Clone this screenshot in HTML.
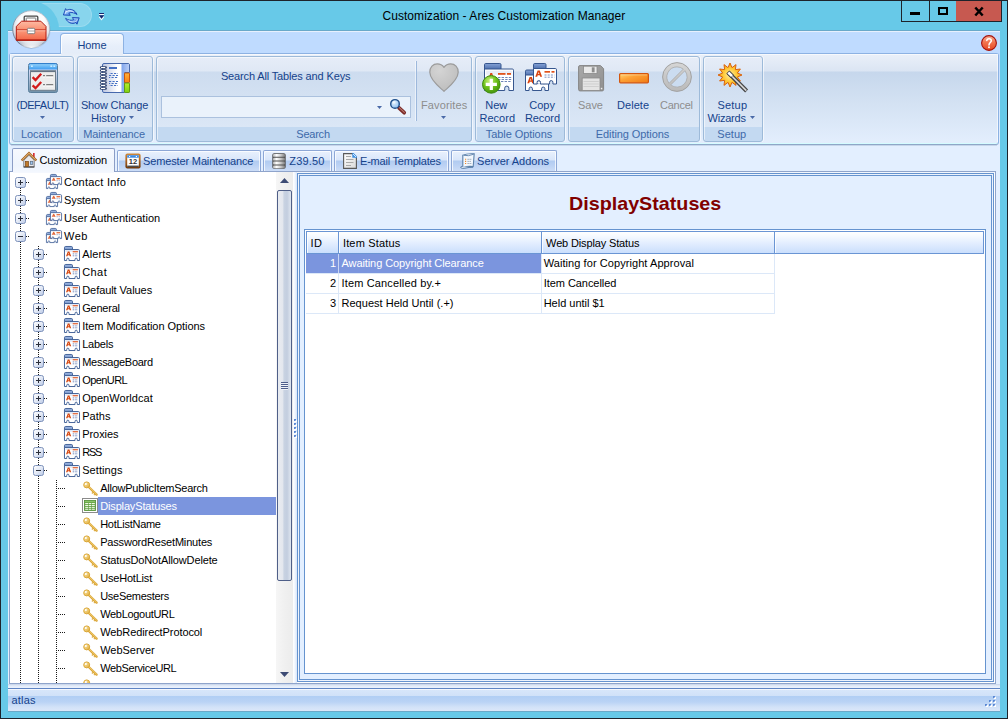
<!DOCTYPE html>
<html lang="en"><head><meta charset="utf-8"><title>Customization - Ares Customization Manager</title>
<style>
html,body{margin:0;padding:0;}
body{width:1008px;height:719px;overflow:hidden;background:#67c9e8;font-family:"Liberation Sans",sans-serif;font-size:11px;color:#000;}
#win{position:absolute;left:0;top:0;width:1008px;height:719px;overflow:hidden;background:#67c9e8;}
#win div,#win span,#win svg{position:absolute;box-sizing:border-box;}
#win svg{overflow:visible;}
.t{white-space:nowrap;line-height:13px;font-size:11px;color:#000;}
.tb{white-space:nowrap;line-height:13px;font-size:11px;color:#15428b;}
.tg{white-space:nowrap;line-height:13px;font-size:11px;color:#8d8d8d;}
.tc{white-space:nowrap;line-height:13px;font-size:11px;color:#3e6aaa;}
.tw{white-space:nowrap;line-height:13px;font-size:11px;color:#fff;}
.grp{border:1px solid #9dbad9;border-radius:3px;background:linear-gradient(#e6edf8 0px,#dfe8f5 14px,#cddcef 15px,#dbe7f6 70px,#c3d9f1 70px,#c3d9f1 100%);box-shadow:inset 1px 1px 0 rgba(255,255,255,.55),1px 0 0 rgba(255,255,255,.6);}

</style></head>
<body>
<div id="win">
<!-- window frame -->
<div style="left:0px;top:0px;width:1008px;height:1px;background:#1d232b"></div><div style="left:0px;top:0px;width:1px;height:719px;background:#1d232b"></div><div style="left:1007px;top:0px;width:1px;height:719px;background:#1d232b"></div><div style="left:0px;top:718px;width:1008px;height:1px;background:#1d232b"></div><div style="left:8px;top:30px;width:992px;height:1px;background:#69a9c9"></div><div style="left:8px;top:31px;width:992px;height:680px;background:#e3efff"></div><div style="left:8px;top:31px;width:992px;height:23px;background:linear-gradient(#e7f0fd 0px,#e7f0fd 1px,#c3ddff 1px,#bfdbff 2px,#bfdbff 100%)"></div><div style="left:36px;top:3px;width:56px;height:24px;border-radius:3px 12px 12px 3px/3px 12px 12px 3px;background:rgba(255,255,255,.22);border:1px solid rgba(255,255,255,.16)"></div><div style="left:3.3px;top:1px;width:56px;height:56px;border-radius:50%;background:#67c9e8"></div><div style="left:8px;top:30px;width:60px;height:1px;background:#69a9c9"></div><div style="left:8px;top:31px;width:60px;height:23px;background:linear-gradient(#e7f0fd 0px,#e7f0fd 1px,#c3ddff 1px,#bfdbff 2px,#bfdbff 100%)"></div><div style="left:1px;top:1px;width:60px;height:2px;background:#67c9e8"></div><svg style="left:62.5px;top:7.7px" width="17" height="18" viewBox="0 0 17 18"><defs><linearGradient id="g1" x1="0" y1="0" x2="1" y2="1"><stop offset="0" stop-color="#eaf4ff"/><stop offset=".45" stop-color="#86b8f5"/><stop offset="1" stop-color="#2a62cf"/></linearGradient></defs>
<path d="M14 6.500C12.300 2.300 7.600 0 3.700 2.300L2.600.6.400 7 7.300 7.300 5.800 5.100C8.500 3.900 11.600 4.700 14 6.500Z" fill="url(#g1)" stroke="#1644b4" stroke-width=".9" stroke-linejoin="round"/>
<path d="M2.600 10.300C4.300 14.500 9 16.800 12.900 14.500l1.100 1.700 2.200-6.400-6.900-.3 1.500 2.200C8.100 12.900 5 12.100 2.600 10.300Z" fill="url(#g1)" stroke="#1644b4" stroke-width=".9" stroke-linejoin="round"/>
<path d="M2.300 5.700 3 3.600C6 2.300 9 2.800 11 4.300" stroke="#ffffff" stroke-width=".9" fill="none" opacity=".75"/>
<path d="M14.300 11.200 13.600 13.200C10.600 14.500 7.600 14 5.600 12.500" stroke="#ffffff" stroke-width=".9" fill="none" opacity=".6"/></svg><svg style="left:98px;top:12px" width="8" height="9" viewBox="0 0 8 9"><path d="M1.200 4.600 3.500 7.700 5.800 4.600" stroke="#f2fbfe" stroke-width="1.100" fill="none"/><rect x="1" y="1" width="5" height="1" fill="#17276f"/><rect x="1" y="2" width="5" height="1" fill="#f2fbfe"/><path d="M.8 3.300H6.200L3.500 6.700Z" fill="#17276f"/></svg><span class="t" style="left:382.5px;top:9px;letter-spacing:0.05px;font-size:12px;line-height:15px;color:#000">Customization - Ares Customization Manager</span><div style="left:901px;top:0px;width:101px;height:22px;background:#1d232b"></div><div style="left:902px;top:1px;width:27px;height:20px;background:#67c9e8"></div><div style="left:930px;top:1px;width:26px;height:20px;background:#67c9e8"></div><div style="left:956px;top:1px;width:45px;height:20px;background:#c75950"></div><div style="left:910px;top:12px;width:10px;height:3px;background:#000"></div><div style="left:938px;top:7px;width:10px;height:8px;border:2px solid #000"></div><svg style="left:974px;top:7px" width="10" height="9" viewBox="0 0 10 9"><path d="M1.300 .5 8.700 8.500M8.700 .5 1.300 8.500" stroke="#000" stroke-width="2.500" stroke-linecap="butt"/></svg><svg style="left:11px;top:9px" width="40" height="42" viewBox="0 0 40 42"><defs>
<radialGradient id="g2" cx="52%" cy="40%" r="60%"><stop offset="0" stop-color="#ffffff"/><stop offset=".62" stop-color="#fbfcfd"/><stop offset=".82" stop-color="#dde1e8"/><stop offset="1" stop-color="#aeb6c4"/></radialGradient>
<linearGradient id="g3" x1="0" y1="0" x2="0" y2="1"><stop offset="0" stop-color="#fdbba4"/><stop offset=".42" stop-color="#fa9274"/><stop offset=".47" stop-color="#fb9a7c"/><stop offset="1" stop-color="#f26647"/></linearGradient>
<radialGradient id="g4" cx="50%" cy="100%" r="65%"><stop offset="0" stop-color="#ffffff" stop-opacity="1"/><stop offset="1" stop-color="#ffffff" stop-opacity="0"/></radialGradient>
<linearGradient id="g5" x1="1" y1="0" x2="0" y2="1"><stop offset="0" stop-color="#c9d0db"/><stop offset="1" stop-color="#5f6f88"/></linearGradient>
</defs>
<circle cx="20.600" cy="20.900" r="18.900" fill="#3f5f80" opacity=".22"/>
<circle cx="20.200" cy="20.200" r="18.500" fill="url(#g2)" stroke="url(#g5)" stroke-width=".9"/>
<ellipse cx="20.300" cy="34" rx="12.500" ry="5" fill="url(#g4)"/>
<path d="M13.200 12.300V8.200q0-1 1-1h11.600q1 0 1 1v4.100" fill="none" stroke="#474747" stroke-width="1.300"/>
<path d="M15.200 12.300V9.600q0-.6.6-.6h8.400q.6 0 .6.600v2.700" fill="#fff" stroke="#6d6d6d" stroke-width=".9"/>
<path d="M5.300 17.400 10.600 12.200H29.800L35 17.400V31.300H5.300Z" fill="url(#g3)" stroke="#b3170d" stroke-width="1"/>
<path d="M5.600 20.800H34.800" stroke="#c22a1a" stroke-width=".9"/>
<path d="M6 21.800H34.500" stroke="#ffc9b6" stroke-width=".8" opacity=".9"/>
<path d="M5.600 31H34.800" stroke="#a51208" stroke-width="1"/>
<rect x="16.400" y="19.300" width="7.400" height="5.400" rx="1" fill="#fff" stroke="#777" stroke-width=".9"/>
<path d="M17 22H23.200" stroke="#8d8d8d" stroke-width=".8"/></svg><svg style="left:981px;top:35px" width="16" height="16" viewBox="0 0 16 16"><defs><linearGradient id="g6" x1="0" y1="0" x2="0" y2="1"><stop offset="0" stop-color="#fbb49a"/><stop offset=".45" stop-color="#f2744f"/><stop offset="1" stop-color="#e6451f"/></linearGradient></defs>
<circle cx="8" cy="8" r="7.400" fill="url(#g6)" stroke="#a3100c" stroke-width="1.100"/>
<path d="M5.800 5.600C5.800 3 10.300 3 10.300 5.700 10.300 7.500 8 7.700 8 10" fill="none" stroke="#fff" stroke-width="1.500" stroke-linecap="round"/>
<circle cx="8" cy="12.200" r=".95" fill="#fff"/></svg><div style="left:60px;top:33px;width:64px;height:22px;border:1px solid #8db2e3;border-bottom:none;border-radius:4px 4px 0 0;background:linear-gradient(#f4f8fe,#e6eefa 60%,#e4ecf8);box-shadow:inset 1px 1px 0 rgba(255,255,255,.9)"></div><span class="tb" style="left:77.5px;top:39px;letter-spacing:-0.11px;">Home</span><!-- ribbon panel -->
<div style="left:8px;top:54px;width:992px;height:92px;background:linear-gradient(#bfdbff,#cfe3ff 40%,#e3efff)"></div><div style="left:9px;top:53px;width:990px;height:92px;border:1px solid #8db2e3;border-bottom-color:#8ea7c8;border-radius:3px;background:linear-gradient(#eaf0f9 0px,#dbe5f3 17px,#c6d7ec 18px,#d4e2f3 50px,#e3eefd 89px,#d4fcff 89px,#d4fcff 90px)"></div><div style="left:10px;top:54px;width:1px;height:88px;background:rgba(255,255,255,.6)"></div><div style="left:997px;top:54px;width:1px;height:88px;background:rgba(255,255,255,.6)"></div><div style="left:10px;top:54px;width:988px;height:1px;background:rgba(255,255,255,.6)"></div><div style="left:11px;top:145px;width:986px;height:1px;background:#c6d6eb"></div><div style="left:61px;top:53px;width:62px;height:3px;background:linear-gradient(#e5edf8,#e9eff9)"></div><div style="left:59px;top:51px;width:2px;height:3px;background:linear-gradient(135deg,rgba(141,178,227,0) 40%,#8db2e3 60%,#8db2e3 100%)"></div><div style="left:123px;top:51px;width:2px;height:3px;background:linear-gradient(225deg,rgba(141,178,227,0) 40%,#8db2e3 60%,#8db2e3 100%)"></div><div class="grp" style="left:12px;top:56px;width:62px;height:86px;"></div><span class="tc" style="left:20.9px;top:128px;letter-spacing:-0.06px;">Location</span><div class="grp" style="left:77px;top:56px;width:76px;height:86px;"></div><span class="tc" style="left:83.2px;top:128px;letter-spacing:-0.11px;">Maintenance</span><div class="grp" style="left:156px;top:56px;width:316px;height:86px;"></div><span class="tc" style="left:296.3px;top:128px;letter-spacing:-0.23px;">Search</span><div class="grp" style="left:475px;top:56px;width:90px;height:86px;"></div><span class="tc" style="left:485.7px;top:128px;letter-spacing:-0.06px;">Table Options</span><div class="grp" style="left:568px;top:56px;width:132px;height:86px;"></div><span class="tc" style="left:595.8px;top:128px;letter-spacing:-0.08px;">Editing Options</span><div class="grp" style="left:703px;top:56px;width:60px;height:86px;"></div><span class="tc" style="left:717.3px;top:128px;letter-spacing:0.04px;">Setup</span><svg style="left:28px;top:63px" width="30" height="30" viewBox="0 0 30 30"><defs>
<linearGradient id="g7" x1="0" y1="0" x2="0" y2="1"><stop offset="0" stop-color="#dde0ff"/><stop offset=".35" stop-color="#c9d2ee"/><stop offset="1" stop-color="#6f8fa6"/></linearGradient>
<linearGradient id="g8" x1="0" y1="0" x2="0" y2="1"><stop offset="0" stop-color="#8fd0fb"/><stop offset="1" stop-color="#3f9df0"/></linearGradient></defs>
<rect x=".5" y=".5" width="29" height="29" rx="2" fill="url(#g7)" stroke="#5b7f9c" stroke-width="1"/>
<path d="M1 6.4V2.5q0-1.5 1.5-1.5h25q1.5 0 1.5 1.5v3.9Z" fill="url(#g8)"/>
<path d="M1 1.6q0-1 1.5-1h25q1.5 0 1.5 1" fill="none" stroke="#2f7fd0" stroke-width="1"/>
<rect x="3" y="2.4" width="1.8" height="1.6" fill="#c9ebff"/><rect x="22.4" y="2.4" width="1.8" height="1.6" fill="#c9ebff"/><rect x="25.4" y="2.4" width="1.8" height="1.6" fill="#c9ebff"/>
<rect x="2.5" y="7.7" width="25" height="19.6" fill="#ededed" stroke="#6d7e8b" stroke-width="1"/>
<path d="M3 8.6H27" stroke="#59687a" stroke-width="1"/>
<path d="M4.6 14.2 7.5 17 13.2 10.8" fill="none" stroke="#d31a1a" stroke-width="2.3"/>
<path d="M4.6 22.4 7.5 25.2 13.2 19" fill="none" stroke="#d31a1a" stroke-width="2.3"/>
<rect x="15" y="12" width="2" height="1.5" fill="#7d7d7d"/><rect x="18.2" y="12" width="7" height="1.5" fill="#7d7d7d"/>
<rect x="15" y="13.5" width="2" height="1" fill="#fff"/><rect x="18.2" y="13.5" width="7" height="1" fill="#fff"/>
<rect x="15" y="21" width="2" height="1.5" fill="#7d7d7d"/><rect x="18.2" y="21" width="7" height="1.5" fill="#7d7d7d"/>
<rect x="15" y="22.5" width="2" height="1" fill="#fff"/><rect x="18.2" y="22.5" width="7" height="1" fill="#fff"/></svg><span class="tb" style="left:16.5px;top:99px;letter-spacing:-0.44px;">(DEFAULT)</span><svg style="left:40px;top:116px" width="5" height="3" viewBox="0 0 5 3"><path d="M0 0H5L2.500 3Z" fill="#4a6aa8"/></svg><svg style="left:100px;top:63px" width="30" height="30" viewBox="0 0 30 30"><defs>
<linearGradient id="g9" x1="0" y1="0" x2="1" y2="0"><stop offset="0" stop-color="#b9c3df"/><stop offset=".55" stop-color="#ffffff"/><stop offset="1" stop-color="#ffffff"/></linearGradient>
<linearGradient id="g10" x1="0" y1="0" x2="0" y2="1"><stop offset="0" stop-color="#ffb13a"/><stop offset="1" stop-color="#fb7f12"/></linearGradient>
<linearGradient id="g11" x1="0" y1="0" x2="0" y2="1"><stop offset="0" stop-color="#b6ee2c"/><stop offset="1" stop-color="#7fd010"/></linearGradient>
<linearGradient id="g12" x1="0" y1="0" x2="1" y2="0"><stop offset="0" stop-color="#7fa4ec"/><stop offset="1" stop-color="#b9cdf6"/></linearGradient></defs>
<path d="M2.5 2q0-1.5 1.5-1.5h24q1.5 0 1.5 1.5v7.5H24.5V29.5H4q-1.5 0-1.5-1.5Z" fill="url(#g9)" stroke="#4668ac" stroke-width="1"/>
<path d="M21.5 1H28q1 0 1 1v7H24V29H21.500Z" fill="url(#g12)"/>
<rect x="24.5" y="10" width="5" height="9.600" rx=".6" fill="url(#g10)" stroke="#c9570c" stroke-width="1"/>
<rect x="24.5" y="20" width="5" height="9.500" rx=".6" fill="url(#g11)" stroke="#5f9b12" stroke-width="1"/>
<rect x="9" y="4" width="8" height="2" fill="#4470c4"/>
<path d="M9 10.5H18" stroke="#4470c4" stroke-width="1" stroke-dasharray="2.2 1.3" stroke-dashoffset="2"/><path d="M9 12.5H18" stroke="#4470c4" stroke-width="1" stroke-dasharray="2.2 1.3" stroke-dashoffset="0"/><path d="M9 14.5H18" stroke="#4470c4" stroke-width="1" stroke-dasharray="2.2 1.3" stroke-dashoffset="1"/><path d="M9 18.5H18" stroke="#4470c4" stroke-width="1" stroke-dasharray="2.2 1.3" stroke-dashoffset="0"/><path d="M9 20.5H18" stroke="#4470c4" stroke-width="1" stroke-dasharray="2.2 1.3" stroke-dashoffset="1"/><path d="M9 22.5H18" stroke="#4470c4" stroke-width="1" stroke-dasharray="2.2 1.3" stroke-dashoffset="2"/><path d="M1.200 4.5H5.600" stroke="#34466e" stroke-width="2.600" stroke-linecap="round"/><path d="M1.400 4.5H4.800" stroke="#ffffff" stroke-width="1" stroke-linecap="round"/><path d="M1.200 7.5H5.600" stroke="#34466e" stroke-width="2.600" stroke-linecap="round"/><path d="M1.400 7.5H4.800" stroke="#ffffff" stroke-width="1" stroke-linecap="round"/><path d="M1.200 10.5H5.600" stroke="#34466e" stroke-width="2.600" stroke-linecap="round"/><path d="M1.400 10.5H4.800" stroke="#ffffff" stroke-width="1" stroke-linecap="round"/><path d="M1.200 13.5H5.600" stroke="#34466e" stroke-width="2.600" stroke-linecap="round"/><path d="M1.400 13.5H4.800" stroke="#ffffff" stroke-width="1" stroke-linecap="round"/><path d="M1.200 16.5H5.600" stroke="#34466e" stroke-width="2.600" stroke-linecap="round"/><path d="M1.400 16.5H4.800" stroke="#ffffff" stroke-width="1" stroke-linecap="round"/><path d="M1.200 19.5H5.600" stroke="#34466e" stroke-width="2.600" stroke-linecap="round"/><path d="M1.400 19.5H4.800" stroke="#ffffff" stroke-width="1" stroke-linecap="round"/><path d="M1.200 22.5H5.600" stroke="#34466e" stroke-width="2.600" stroke-linecap="round"/><path d="M1.400 22.5H4.800" stroke="#ffffff" stroke-width="1" stroke-linecap="round"/><path d="M1.200 25.5H5.600" stroke="#34466e" stroke-width="2.600" stroke-linecap="round"/><path d="M1.400 25.5H4.800" stroke="#ffffff" stroke-width="1" stroke-linecap="round"/></svg><span class="tb" style="left:80.9px;top:99px;letter-spacing:-0.17px;">Show Change</span><span class="tb" style="left:91.1px;top:112px;letter-spacing:0.04px;">History</span><svg style="left:129px;top:116px" width="5" height="3" viewBox="0 0 5 3"><path d="M0 0H5L2.500 3Z" fill="#4a6aa8"/></svg><span class="tb" style="left:220.9px;top:70px;letter-spacing:-0.14px;">Search All Tables and Keys</span><div style="left:161px;top:96px;width:250px;height:22px;border:1px solid #abc1de;background:#eaf2fb"></div><svg style="left:377px;top:106px" width="5" height="3" viewBox="0 0 5 3"><path d="M0 0H5L2.500 3Z" fill="#4a6aa8"/></svg><svg style="left:390px;top:98px" width="17" height="17" viewBox="0 0 17 17"><defs><radialGradient id="g13" cx="38%" cy="32%" r="75%"><stop offset="0" stop-color="#ffffff"/><stop offset=".35" stop-color="#c4e0fa"/><stop offset="1" stop-color="#8dbdee"/></radialGradient></defs>
<path d="M9 9.800 14.200 14.700" stroke="#7a2824" stroke-width="3.700" stroke-linecap="round"/>
<path d="M9.300 9.700 14.300 14.400" stroke="#b9776f" stroke-width="1.100" stroke-linecap="round"/>
<circle cx="5" cy="5.900" r="4.300" fill="url(#g13)" stroke="#1f4f8c" stroke-width="1.400"/></svg><div style="left:415px;top:61px;width:1px;height:60px;background:rgba(255,255,255,.55)"></div><div style="left:416px;top:61px;width:1px;height:60px;background:#9db8dc"></div><svg style="left:429px;top:63px" width="30" height="29" viewBox="0 0 30 29"><defs><radialGradient id="g14" cx="35%" cy="25%" r="80%"><stop offset="0" stop-color="#d4d4d4"/><stop offset="1" stop-color="#bdbdbd"/></radialGradient></defs>
<path d="M15 28.300C11 24.500 1 17.500.8 9.300.600 4 4.200.800 8.300.800c3 0 5.300 1.500 6.700 3.500C16.400 2.300 18.700.800 21.700.800c4.100 0 7.700 3.200 7.500 8.500C29 17.500 19 24.500 15 28.300Z" fill="url(#g14)" stroke="#9b9b9b" stroke-width="1.200" stroke-linejoin="round"/></svg><span class="tg" style="left:420.9px;top:99px;letter-spacing:0.14px;">Favorites</span><svg style="left:441px;top:116px" width="5" height="3" viewBox="0 0 5 3"><path d="M0 0H5L2.500 3Z" fill="#4a6aa8"/></svg><svg style="left:484px;top:63px" width="31" height="31" viewBox="0 0 31 31"><defs><linearGradient id="g16" x1="0" y1="0" x2="0" y2="1"><stop offset="0" stop-color="#86a3d6"/><stop offset="1" stop-color="#4668a8"/></linearGradient></defs>
<path d="M0.5 7V1.7q0-1.200 1.200-1.200H15.8q1.200 0 1.200 1.200V7Z" fill="url(#g16)" stroke="#36568e" stroke-width="1.0"/>
<path d="M0.5 6H28.3q1.200 0 1.200 1.200V27.5H24.9V25.204q0-2.10-2.10-2.10t-2.10 2.10V27.5H9.3V25.204q0-2.10-2.10-2.10t-2.10 2.10V27.5H0.5Z" fill="#fff" stroke="#36568e" stroke-width="1.0" stroke-linejoin="round"/><rect x="2.200" y="7.700" width="25.600" height="4" fill="#e9edf6"/>
<rect x="14" y="10" width="7.500" height="1.800" fill="#e2531a"/><rect x="23" y="10" width="4" height="1.800" fill="#e2531a"/>
<path d="M14 14.500H27.500M14 16.500H27.500M17 18.500H27.500" stroke="#6f86b8" stroke-width="1" stroke-dasharray="2.400 1.200"/>
<path d="M4.50 16.00L6.37 10.00H8.13L10.00 16.00H8.46L8.07 14.56H6.42L6.04 16.00ZM6.75 13.36H7.74L7.25 11.44Z" fill="#d9440f" fill-rule="evenodd"/><defs><radialGradient id="g15" cx="40%" cy="30%" r="75%"><stop offset="0" stop-color="#c9f27a"/><stop offset=".5" stop-color="#6fc21c"/><stop offset="1" stop-color="#3f8f0a"/></radialGradient></defs>
<circle cx="7.300" cy="21.400" r="8.800" fill="url(#g15)" stroke="#3e8a10" stroke-width="1"/>
<path d="M7.300 15.800V27M1.700 21.400H12.900" stroke="#fff" stroke-width="3.200"/></svg><span class="tb" style="left:485.2px;top:99px;letter-spacing:0.04px;">New</span><span class="tb" style="left:479.5px;top:112px;letter-spacing:0.01px;">Record</span><svg style="left:525px;top:63px" width="33" height="29" viewBox="0 0 33 29"><g transform="translate(0 6.5)"><defs><linearGradient id="g18" x1="0" y1="0" x2="0" y2="1"><stop offset="0" stop-color="#86a3d6"/><stop offset="1" stop-color="#4668a8"/></linearGradient></defs>
<path d="M0.5 6.5V1.7q0-1.200 1.200-1.200H11.8q1.200 0 1.200 1.200V6.5Z" fill="url(#g18)" stroke="#36568e" stroke-width="1.0"/>
<path d="M0.5 5.5H22.3q1.200 0 1.200 1.200V21.0H19.919999999999998V19.237q0-1.68-1.68-1.68t-1.68 1.68V21.0H7.44V19.237q0-1.68-1.68-1.68t-1.68 1.68V21.0H0.5Z" fill="#fff" stroke="#36568e" stroke-width="1.0" stroke-linejoin="round"/><path d="M2.30 13.80L4.61 7.60H6.79L9.10 13.80H7.20L6.72 12.31H4.68L4.20 13.80ZM5.09 11.07H6.31L5.70 9.09Z" fill="#d9440f" fill-rule="evenodd"/>
<rect x="11.500" y="8" width="5.500" height="1.700" fill="#e2531a"/><rect x="18.500" y="8" width="3" height="1.700" fill="#e2531a"/>
<path d="M11.500 12H21.500M11.500 14.200H21.500" stroke="#7d92c0" stroke-width="1" stroke-dasharray="2 1.200"/></g><g transform="translate(8 0)"><defs><linearGradient id="g20" x1="0" y1="0" x2="0" y2="1"><stop offset="0" stop-color="#86a3d6"/><stop offset="1" stop-color="#4668a8"/></linearGradient></defs>
<path d="M0.5 6.5V1.7q0-1.200 1.200-1.200H11.8q1.200 0 1.200 1.200V6.5Z" fill="url(#g20)" stroke="#36568e" stroke-width="1.0"/>
<path d="M0.5 5.5H22.3q1.200 0 1.200 1.200V21.0H19.919999999999998V19.237q0-1.68-1.68-1.68t-1.68 1.68V21.0H7.44V19.237q0-1.68-1.68-1.68t-1.68 1.68V21.0H0.5Z" fill="#fff" stroke="#36568e" stroke-width="1.0" stroke-linejoin="round"/><path d="M2.30 13.80L4.61 7.60H6.79L9.10 13.80H7.20L6.72 12.31H4.68L4.20 13.80ZM5.09 11.07H6.31L5.70 9.09Z" fill="#d9440f" fill-rule="evenodd"/>
<rect x="11.500" y="8" width="5.500" height="1.700" fill="#e2531a"/><rect x="18.500" y="8" width="3" height="1.700" fill="#e2531a"/>
<path d="M11.500 12H21.500M11.500 14.200H21.500" stroke="#7d92c0" stroke-width="1" stroke-dasharray="2 1.200"/></g></svg><span class="tb" style="left:529.3px;top:99px;letter-spacing:0.00px;">Copy</span><span class="tb" style="left:524.9px;top:112px;letter-spacing:-0.07px;">Record</span><svg style="left:578px;top:64.7px" width="27" height="27" viewBox="0 0 27 27"><defs><linearGradient id="g22" x1="0" y1="0" x2="1" y2="1"><stop offset="0" stop-color="#a9a9a9"/><stop offset="1" stop-color="#8f8f8f"/></linearGradient></defs>
<path d="M.6 2q0-1.400 1.400-1.400H22.500L25.600 3.700V24.500q0 1.400-1.400 1.400H2q-1.400 0-1.400-1.400Z" fill="url(#g22)" stroke="#858585" stroke-width="1"/>
<rect x="5.500" y="1.200" width="13.500" height="7.300" fill="#e9e9e9" stroke="#8a8a8a" stroke-width=".8"/>
<rect x="13.800" y="2.300" width="2.800" height="5" fill="#8d8d8d"/>
<rect x="4.200" y="13" width="17.800" height="12.400" fill="#e4e4e4" stroke="#8a8a8a" stroke-width=".8"/>
<path d="M5.500 16.500H20.800M5.500 19H20.800M5.500 21.500H20.800" stroke="#cfcfcf" stroke-width="1"/>
<rect x="22.800" y="22.800" width="1.500" height="1.500" fill="#efefef"/></svg><span class="tg" style="left:578.1px;top:99px;letter-spacing:-0.06px;">Save</span><svg style="left:619px;top:73px" width="30" height="11" viewBox="0 0 30 11"><defs><linearGradient id="g23" x1="0" y1="0" x2="1" y2="1"><stop offset="0" stop-color="#ffd978"/><stop offset=".4" stop-color="#fda236"/><stop offset="1" stop-color="#f07a14"/></linearGradient></defs>
<rect x=".6" y=".6" width="28.800" height="9.200" rx="1" fill="url(#g23)" stroke="#d4560e" stroke-width="1.200"/>
<path d="M1.800 1.900H28.200" stroke="#ffe0b0" stroke-width=".8" opacity=".7"/></svg><span class="tb" style="left:617.0px;top:99px;letter-spacing:0.04px;">Delete</span><svg style="left:662px;top:62px" width="30" height="30" viewBox="0 0 30 30"><defs><linearGradient id="g24" x1="0" y1="0" x2="0" y2="1"><stop offset="0" stop-color="#d6d6d6"/><stop offset="1" stop-color="#b9b9b9"/></linearGradient></defs>
<circle cx="15" cy="15" r="14.400" fill="url(#g24)" stroke="#a2a2a2" stroke-width="1"/>
<path d="M15 4.900a10.100 10.100 0 0 1 6.300 2.200L7.100 21.300A10.100 10.100 0 0 1 15 4.900ZM22.900 8.700A10.100 10.100 0 0 1 8.700 22.900Z" fill="#cbdcf0" stroke="#a9a9a9" stroke-width=".8"/></svg><span class="tg" style="left:660.0px;top:99px;letter-spacing:-0.25px;">Cancel</span><svg style="left:718px;top:63px" width="31" height="31" viewBox="0 0 31 31"><defs><radialGradient id="g25" cx="50%" cy="50%" r="55%"><stop offset="0" stop-color="#fff0a0"/><stop offset=".55" stop-color="#ffc630"/><stop offset="1" stop-color="#f59a18"/></radialGradient>
<linearGradient id="g26" x1="0" y1="1" x2="1" y2="0"><stop offset="0" stop-color="#4a4a4a"/><stop offset=".5" stop-color="#e9e9e9"/><stop offset="1" stop-color="#4a4a4a"/></linearGradient></defs>
<polygon points="12.00,0.00 13.97,4.66 18.00,1.61 17.37,6.63 22.39,6.00 19.34,10.03 24.00,12.00 19.34,13.97 22.39,18.00 17.37,17.37 18.00,22.39 13.97,19.34 12.00,24.00 10.03,19.34 6.00,22.39 6.63,17.37 1.61,18.00 4.66,13.97 0.00,12.00 4.66,10.03 1.61,6.00 6.63,6.63 6.00,1.61 10.03,4.66" fill="url(#g25)" stroke="#d9640f" stroke-width="1" stroke-linejoin="round"/>
<path d="M10.500 9.700 28.600 27.900" stroke="#444" stroke-width="4.200"/>
<path d="M10.800 10 28.300 27.600" stroke="#d9d9d9" stroke-width="1.600"/>
<path d="M9.800 9 14.200 13.400" stroke="#444" stroke-width="4.400"/>
<path d="M10.300 9.500 14 13.200" stroke="#fff" stroke-width="2.600"/></svg><span class="tb" style="left:717.5px;top:99px;letter-spacing:0.19px;">Setup</span><span class="tb" style="left:707.5px;top:112px;letter-spacing:-0.21px;">Wizards</span><svg style="left:750px;top:116px" width="5" height="3" viewBox="0 0 5 3"><path d="M0 0H5L2.500 3Z" fill="#4a6aa8"/></svg><!-- document tabs -->
<div style="left:9px;top:171px;width:987px;height:513px;border:1px solid #8fa4cb;background:#fff"></div><div style="left:117px;top:150px;width:144px;height:21px;border:1px solid #8da7d6;border-bottom:none;border-radius:2px 2px 0 0;background:linear-gradient(#e9f1fd 0px,#d9e6fa 9px,#b1cbf1 10px,#bdd3f4 15px,#cfdff8 21px);box-shadow:inset 1px 1px 0 rgba(255,255,255,.75),inset -1px 0 0 rgba(255,255,255,.75)"></div><div style="left:263px;top:150px;width:69px;height:21px;border:1px solid #8da7d6;border-bottom:none;border-radius:2px 2px 0 0;background:linear-gradient(#e9f1fd 0px,#d9e6fa 9px,#b1cbf1 10px,#bdd3f4 15px,#cfdff8 21px);box-shadow:inset 1px 1px 0 rgba(255,255,255,.75),inset -1px 0 0 rgba(255,255,255,.75)"></div><div style="left:334px;top:150px;width:115px;height:21px;border:1px solid #8da7d6;border-bottom:none;border-radius:2px 2px 0 0;background:linear-gradient(#e9f1fd 0px,#d9e6fa 9px,#b1cbf1 10px,#bdd3f4 15px,#cfdff8 21px);box-shadow:inset 1px 1px 0 rgba(255,255,255,.75),inset -1px 0 0 rgba(255,255,255,.75)"></div><div style="left:451px;top:150px;width:106px;height:21px;border:1px solid #8da7d6;border-bottom:none;border-radius:2px 2px 0 0;background:linear-gradient(#e9f1fd 0px,#d9e6fa 9px,#b1cbf1 10px,#bdd3f4 15px,#cfdff8 21px);box-shadow:inset 1px 1px 0 rgba(255,255,255,.75),inset -1px 0 0 rgba(255,255,255,.75)"></div><div style="left:12px;top:148px;width:103px;height:25px;border:1px solid #8b9dc6;border-bottom:none;border-radius:2px 2px 0 0;background:linear-gradient(#f6f9fe,#eef4fd 70%,#f4f8fe)"></div><svg style="left:21px;top:152px" width="16" height="16" viewBox="0 0 16 16"><path d="M12.100 1h1.500v5h-1.500Z" fill="#d31820"/>
<path d="M2.800 8.300 8 3.200 13.200 8.300V15.300H2.800Z" fill="#e9e9ec" stroke="#6e6e72" stroke-width=".9"/>
<path d="M2.800 14.800H13.200" stroke="#4e4e50" stroke-width="1.100"/>
<path d="M.6 8.500 8 1.200 15.400 8.500" fill="none" stroke="#a5651f" stroke-width="2.300" stroke-linejoin="miter"/>
<path d="M1.300 7.900 8 1.300 14.700 7.900" fill="none" stroke="#f2c58c" stroke-width=".9"/>
<rect x="4.500" y="9.600" width="3" height="5" fill="#c17a2a" stroke="#7a4510" stroke-width=".7"/>
<rect x="9.300" y="9.300" width="2.500" height="3" fill="#9cc6f2" stroke="#5a6a80" stroke-width=".7"/></svg><span class="t" style="left:39.5px;top:154px;letter-spacing:-0.18px;">Customization</span><svg style="left:125px;top:153px" width="16" height="16" viewBox="0 0 16 16"><defs><linearGradient id="g27" x1="0" y1="0" x2="0" y2="1"><stop offset="0" stop-color="#cf8b3e"/><stop offset=".5" stop-color="#a8601f"/><stop offset="1" stop-color="#6b370c"/></linearGradient></defs>
<rect x=".4" y=".4" width="15.200" height="15.200" rx="2" fill="url(#g27)"/>
<rect x="2.200" y="2.200" width="11.600" height="11.600" fill="#fff"/>
<rect x="2.200" y="2.200" width="11.600" height="2.500" fill="#3a8ae6"/>
<rect x="4" y="3" width="1.200" height="1" fill="#fff"/><rect x="10.800" y="3" width="1.200" height="1" fill="#fff"/>
<rect x="2.200" y="12.600" width="11.600" height="1.300" fill="#3c3c3c"/>
<text x="8" y="11.400" font-family="Liberation Sans, sans-serif" font-size="7.600" font-weight="bold" text-anchor="middle" fill="#333">12</text></svg><span class="tb" style="left:143.1px;top:155px;letter-spacing:-0.15px;">Semester Maintenance</span><svg style="left:272px;top:153px" width="14" height="16" viewBox="0 0 14 16"><defs><linearGradient id="g28" x1="0" y1="0" x2="1" y2="0"><stop offset="0" stop-color="#b5b5b5"/><stop offset=".3" stop-color="#ffffff"/><stop offset=".65" stop-color="#c9c9c9"/><stop offset="1" stop-color="#7d7d7d"/></linearGradient></defs><rect x=".3" y=".3" width="13.400" height="15.400" rx="1.800" fill="#4f4f4f"/><rect x="1" y="1.0" width="12" height="2.800" rx=".9" fill="url(#g28)"/><rect x="1" y="4.8" width="12" height="2.800" rx=".9" fill="url(#g28)"/><rect x="1" y="8.6" width="12" height="2.800" rx=".9" fill="url(#g28)"/><rect x="1" y="12.4" width="12" height="2.800" rx=".9" fill="url(#g28)"/></svg><span class="tb" style="left:289.3px;top:155px;letter-spacing:0.15px;">Z39.50</span><svg style="left:343px;top:153px" width="14" height="16" viewBox="0 0 14 16"><defs><linearGradient id="g29" x1="0" y1="0" x2="1" y2="1"><stop offset="0" stop-color="#ffffff"/><stop offset="1" stop-color="#d9d9d9"/></linearGradient></defs>
<path d="M.6 .6H9.600L13.400 4.400V15.400H.6Z" fill="url(#g29)" stroke="#585858" stroke-width="1.100"/>
<path d="M9.300 0H10.500L14 3.500V4.800H9.300Z" fill="#3f92e4"/>
<path d="M10 1 13 4" stroke="#d6ebff" stroke-width="1"/>
<path d="M3 3.500H8M3 6.500H10.500M3 9.500H10.500M3 12.500H8" stroke="#a9a9a9" stroke-width="1.200"/></svg><span class="tb" style="left:360px;top:155px;letter-spacing:-0.21px;">E-mail Templates</span><svg style="left:460px;top:153px" width="15" height="16" viewBox="0 0 15 16"><path d="M2.800 2.200Q7 .3 14.200.8L13.200 13.500Q7 13 2.800 14.500Z" fill="#f2f7fd" stroke="#5b80aa" stroke-width="1.100"/>
<path d="M4 2.300Q8 3.600 13.800 1.200" fill="#fff" stroke="#5b80aa" stroke-width=".9"/>
<path d="M2.800 13.400Q.8 13 .6 14.600 2 16 5 15.200 9 14.200 13.200 14.300" fill="#dbe6f3" stroke="#5b80aa" stroke-width="1"/>
<path d="M5 6.300H6.200M5 8.400H6.200M5 10.500H6.200" stroke="#f08a2c" stroke-width="1.100"/>
<path d="M7.500 6.300H11.800M7.500 8.400H11M7.500 10.500H11.800" stroke="#8a98ac" stroke-width=".9" stroke-dasharray="1.300 .7"/></svg><span class="tb" style="left:477.1px;top:155px;letter-spacing:-0.02px;">Server Addons</span><!-- tree -->
<div style="left:10px;top:172px;width:266px;height:511px;overflow:hidden;background:#fff"><div style="left:10px;top:10px;width:1px;height:520px;background:repeating-linear-gradient(180deg,#1a1a1a 0px,#1a1a1a 1px,transparent 1px,transparent 2px)"></div><div style="left:28px;top:74px;width:1px;height:460px;background:repeating-linear-gradient(180deg,#1a1a1a 0px,#1a1a1a 1px,transparent 1px,transparent 2px)"></div><div style="left:46px;top:308px;width:1px;height:230px;background:repeating-linear-gradient(180deg,#1a1a1a 0px,#1a1a1a 1px,transparent 1px,transparent 2px)"></div><div style="left:16px;top:10px;width:4px;height:1px;background:repeating-linear-gradient(90deg,#1a1a1a 0px,#1a1a1a 1px,transparent 1px,transparent 2px)"></div><svg style="left:5px;top:5px" width="11" height="11" viewBox="0 0 11 11"><defs><linearGradient id="g30" x1="0" y1="0" x2="1" y2="1"><stop offset="0" stop-color="#ffffff"/><stop offset=".5" stop-color="#e4eaf6"/><stop offset="1" stop-color="#b9c7e4"/></linearGradient></defs>
<rect x=".5" y=".5" width="10" height="10" rx="2" fill="url(#g30)" stroke="#7f93bb" stroke-width="1"/><path d="M3 5.500H8M5.500 3V8" stroke="#2b2f3a" stroke-width="1"/></svg><svg style="left:36px;top:2px" width="16" height="15" viewBox="0 0 16 15"><g transform="translate(0 4)"><defs><linearGradient id="g31" x1="0" y1="0" x2="0" y2="1"><stop offset="0" stop-color="#a9bfe6"/><stop offset="1" stop-color="#6f8fc6"/></linearGradient></defs>
<path d="M0.425 3.6V1.625q0-1.200 1.200-1.200H5.3q1.200 0 1.200 1.200V3.6Z" fill="url(#g31)" stroke="#44639a" stroke-width="0.85"/>
<path d="M0.425 2.6H10.375q1.200 0 1.200 1.200V10.575H9.959999999999999V9.673q0-0.84-0.84-0.84t-0.84 0.84V10.575H3.72V9.673q0-0.84-0.84-0.84t-0.84 0.84V10.575H0.425Z" fill="#fff" stroke="#44639a" stroke-width="0.85" stroke-linejoin="round"/><path d="M2.200 6.800 3.700 3.900 5.200 6.800" fill="#e9724a" stroke="#d9551f" stroke-width=".7"/><rect x="6.500" y="4.200" width="3.800" height="1.100" fill="#e2531a"/><path d="M6.500 6.700H10.500" stroke="#8ea0c8" stroke-width=".9" stroke-dasharray="1.300 .8"/></g><g transform="translate(4 0)"><defs><linearGradient id="g33" x1="0" y1="0" x2="0" y2="1"><stop offset="0" stop-color="#a9bfe6"/><stop offset="1" stop-color="#6f8fc6"/></linearGradient></defs>
<path d="M0.425 3.6V1.625q0-1.200 1.200-1.200H5.3q1.200 0 1.200 1.200V3.6Z" fill="url(#g33)" stroke="#44639a" stroke-width="0.85"/>
<path d="M0.425 2.6H10.375q1.200 0 1.200 1.200V10.575H9.959999999999999V9.673q0-0.84-0.84-0.84t-0.84 0.84V10.575H3.72V9.673q0-0.84-0.84-0.84t-0.84 0.84V10.575H0.425Z" fill="#fff" stroke="#44639a" stroke-width="0.85" stroke-linejoin="round"/><path d="M2.200 6.800 3.700 3.900 5.200 6.800" fill="#e9724a" stroke="#d9551f" stroke-width=".7"/><rect x="6.500" y="4.200" width="3.800" height="1.100" fill="#e2531a"/><path d="M6.500 6.700H10.500" stroke="#8ea0c8" stroke-width=".9" stroke-dasharray="1.300 .8"/></g></svg><span class="t" style="left:54.099999999999994px;top:4px;letter-spacing:0.23px;">Contact Info</span><div style="left:16px;top:28px;width:4px;height:1px;background:repeating-linear-gradient(90deg,#1a1a1a 0px,#1a1a1a 1px,transparent 1px,transparent 2px)"></div><svg style="left:5px;top:23px" width="11" height="11" viewBox="0 0 11 11"><defs><linearGradient id="g35" x1="0" y1="0" x2="1" y2="1"><stop offset="0" stop-color="#ffffff"/><stop offset=".5" stop-color="#e4eaf6"/><stop offset="1" stop-color="#b9c7e4"/></linearGradient></defs>
<rect x=".5" y=".5" width="10" height="10" rx="2" fill="url(#g35)" stroke="#7f93bb" stroke-width="1"/><path d="M3 5.500H8M5.500 3V8" stroke="#2b2f3a" stroke-width="1"/></svg><svg style="left:36px;top:20px" width="16" height="15" viewBox="0 0 16 15"><g transform="translate(0 4)"><defs><linearGradient id="g36" x1="0" y1="0" x2="0" y2="1"><stop offset="0" stop-color="#a9bfe6"/><stop offset="1" stop-color="#6f8fc6"/></linearGradient></defs>
<path d="M0.425 3.6V1.625q0-1.200 1.200-1.200H5.3q1.200 0 1.200 1.200V3.6Z" fill="url(#g36)" stroke="#44639a" stroke-width="0.85"/>
<path d="M0.425 2.6H10.375q1.200 0 1.200 1.200V10.575H9.959999999999999V9.673q0-0.84-0.84-0.84t-0.84 0.84V10.575H3.72V9.673q0-0.84-0.84-0.84t-0.84 0.84V10.575H0.425Z" fill="#fff" stroke="#44639a" stroke-width="0.85" stroke-linejoin="round"/><path d="M2.200 6.800 3.700 3.900 5.200 6.800" fill="#e9724a" stroke="#d9551f" stroke-width=".7"/><rect x="6.500" y="4.200" width="3.800" height="1.100" fill="#e2531a"/><path d="M6.500 6.700H10.500" stroke="#8ea0c8" stroke-width=".9" stroke-dasharray="1.300 .8"/></g><g transform="translate(4 0)"><defs><linearGradient id="g38" x1="0" y1="0" x2="0" y2="1"><stop offset="0" stop-color="#a9bfe6"/><stop offset="1" stop-color="#6f8fc6"/></linearGradient></defs>
<path d="M0.425 3.6V1.625q0-1.200 1.200-1.200H5.3q1.200 0 1.200 1.200V3.6Z" fill="url(#g38)" stroke="#44639a" stroke-width="0.85"/>
<path d="M0.425 2.6H10.375q1.200 0 1.200 1.200V10.575H9.959999999999999V9.673q0-0.84-0.84-0.84t-0.84 0.84V10.575H3.72V9.673q0-0.84-0.84-0.84t-0.84 0.84V10.575H0.425Z" fill="#fff" stroke="#44639a" stroke-width="0.85" stroke-linejoin="round"/><path d="M2.200 6.800 3.700 3.900 5.200 6.800" fill="#e9724a" stroke="#d9551f" stroke-width=".7"/><rect x="6.500" y="4.200" width="3.800" height="1.100" fill="#e2531a"/><path d="M6.500 6.700H10.500" stroke="#8ea0c8" stroke-width=".9" stroke-dasharray="1.300 .8"/></g></svg><span class="t" style="left:54.099999999999994px;top:22px;letter-spacing:-0.14px;">System</span><div style="left:16px;top:46px;width:4px;height:1px;background:repeating-linear-gradient(90deg,#1a1a1a 0px,#1a1a1a 1px,transparent 1px,transparent 2px)"></div><svg style="left:5px;top:41px" width="11" height="11" viewBox="0 0 11 11"><defs><linearGradient id="g40" x1="0" y1="0" x2="1" y2="1"><stop offset="0" stop-color="#ffffff"/><stop offset=".5" stop-color="#e4eaf6"/><stop offset="1" stop-color="#b9c7e4"/></linearGradient></defs>
<rect x=".5" y=".5" width="10" height="10" rx="2" fill="url(#g40)" stroke="#7f93bb" stroke-width="1"/><path d="M3 5.500H8M5.500 3V8" stroke="#2b2f3a" stroke-width="1"/></svg><svg style="left:36px;top:38px" width="16" height="15" viewBox="0 0 16 15"><g transform="translate(0 4)"><defs><linearGradient id="g41" x1="0" y1="0" x2="0" y2="1"><stop offset="0" stop-color="#a9bfe6"/><stop offset="1" stop-color="#6f8fc6"/></linearGradient></defs>
<path d="M0.425 3.6V1.625q0-1.200 1.200-1.200H5.3q1.200 0 1.200 1.200V3.6Z" fill="url(#g41)" stroke="#44639a" stroke-width="0.85"/>
<path d="M0.425 2.6H10.375q1.200 0 1.200 1.200V10.575H9.959999999999999V9.673q0-0.84-0.84-0.84t-0.84 0.84V10.575H3.72V9.673q0-0.84-0.84-0.84t-0.84 0.84V10.575H0.425Z" fill="#fff" stroke="#44639a" stroke-width="0.85" stroke-linejoin="round"/><path d="M2.200 6.800 3.700 3.900 5.200 6.800" fill="#e9724a" stroke="#d9551f" stroke-width=".7"/><rect x="6.500" y="4.200" width="3.800" height="1.100" fill="#e2531a"/><path d="M6.500 6.700H10.500" stroke="#8ea0c8" stroke-width=".9" stroke-dasharray="1.300 .8"/></g><g transform="translate(4 0)"><defs><linearGradient id="g43" x1="0" y1="0" x2="0" y2="1"><stop offset="0" stop-color="#a9bfe6"/><stop offset="1" stop-color="#6f8fc6"/></linearGradient></defs>
<path d="M0.425 3.6V1.625q0-1.200 1.200-1.200H5.3q1.200 0 1.200 1.200V3.6Z" fill="url(#g43)" stroke="#44639a" stroke-width="0.85"/>
<path d="M0.425 2.6H10.375q1.200 0 1.200 1.200V10.575H9.959999999999999V9.673q0-0.84-0.84-0.84t-0.84 0.84V10.575H3.72V9.673q0-0.84-0.84-0.84t-0.84 0.84V10.575H0.425Z" fill="#fff" stroke="#44639a" stroke-width="0.85" stroke-linejoin="round"/><path d="M2.200 6.800 3.700 3.900 5.200 6.800" fill="#e9724a" stroke="#d9551f" stroke-width=".7"/><rect x="6.500" y="4.200" width="3.800" height="1.100" fill="#e2531a"/><path d="M6.500 6.700H10.500" stroke="#8ea0c8" stroke-width=".9" stroke-dasharray="1.300 .8"/></g></svg><span class="t" style="left:54.099999999999994px;top:40px;letter-spacing:0.04px;">User Authentication</span><div style="left:16px;top:64px;width:4px;height:1px;background:repeating-linear-gradient(90deg,#1a1a1a 0px,#1a1a1a 1px,transparent 1px,transparent 2px)"></div><svg style="left:5px;top:59px" width="11" height="11" viewBox="0 0 11 11"><defs><linearGradient id="g45" x1="0" y1="0" x2="1" y2="1"><stop offset="0" stop-color="#ffffff"/><stop offset=".5" stop-color="#e4eaf6"/><stop offset="1" stop-color="#b9c7e4"/></linearGradient></defs>
<rect x=".5" y=".5" width="10" height="10" rx="2" fill="url(#g45)" stroke="#7f93bb" stroke-width="1"/><path d="M3 5.500H8" stroke="#2b2f3a" stroke-width="1"/></svg><svg style="left:36px;top:56px" width="16" height="15" viewBox="0 0 16 15"><g transform="translate(0 4)"><defs><linearGradient id="g46" x1="0" y1="0" x2="0" y2="1"><stop offset="0" stop-color="#a9bfe6"/><stop offset="1" stop-color="#6f8fc6"/></linearGradient></defs>
<path d="M0.425 3.6V1.625q0-1.200 1.200-1.200H5.3q1.200 0 1.200 1.200V3.6Z" fill="url(#g46)" stroke="#44639a" stroke-width="0.85"/>
<path d="M0.425 2.6H10.375q1.200 0 1.200 1.200V10.575H9.959999999999999V9.673q0-0.84-0.84-0.84t-0.84 0.84V10.575H3.72V9.673q0-0.84-0.84-0.84t-0.84 0.84V10.575H0.425Z" fill="#fff" stroke="#44639a" stroke-width="0.85" stroke-linejoin="round"/><path d="M2.200 6.800 3.700 3.900 5.200 6.800" fill="#e9724a" stroke="#d9551f" stroke-width=".7"/><rect x="6.500" y="4.200" width="3.800" height="1.100" fill="#e2531a"/><path d="M6.500 6.700H10.500" stroke="#8ea0c8" stroke-width=".9" stroke-dasharray="1.300 .8"/></g><g transform="translate(4 0)"><defs><linearGradient id="g48" x1="0" y1="0" x2="0" y2="1"><stop offset="0" stop-color="#a9bfe6"/><stop offset="1" stop-color="#6f8fc6"/></linearGradient></defs>
<path d="M0.425 3.6V1.625q0-1.200 1.200-1.200H5.3q1.200 0 1.200 1.200V3.6Z" fill="url(#g48)" stroke="#44639a" stroke-width="0.85"/>
<path d="M0.425 2.6H10.375q1.200 0 1.200 1.200V10.575H9.959999999999999V9.673q0-0.84-0.84-0.84t-0.84 0.84V10.575H3.72V9.673q0-0.84-0.84-0.84t-0.84 0.84V10.575H0.425Z" fill="#fff" stroke="#44639a" stroke-width="0.85" stroke-linejoin="round"/><path d="M2.200 6.800 3.700 3.900 5.200 6.800" fill="#e9724a" stroke="#d9551f" stroke-width=".7"/><rect x="6.500" y="4.200" width="3.800" height="1.100" fill="#e2531a"/><path d="M6.500 6.700H10.500" stroke="#8ea0c8" stroke-width=".9" stroke-dasharray="1.300 .8"/></g></svg><span class="t" style="left:54.099999999999994px;top:58px;letter-spacing:0.39px;">Web</span><div style="left:34px;top:82px;width:4px;height:1px;background:repeating-linear-gradient(90deg,#1a1a1a 0px,#1a1a1a 1px,transparent 1px,transparent 2px)"></div><svg style="left:23px;top:77px" width="11" height="11" viewBox="0 0 11 11"><defs><linearGradient id="g50" x1="0" y1="0" x2="1" y2="1"><stop offset="0" stop-color="#ffffff"/><stop offset=".5" stop-color="#e4eaf6"/><stop offset="1" stop-color="#b9c7e4"/></linearGradient></defs>
<rect x=".5" y=".5" width="10" height="10" rx="2" fill="url(#g50)" stroke="#7f93bb" stroke-width="1"/><path d="M3 5.500H8M5.500 3V8" stroke="#2b2f3a" stroke-width="1"/></svg><svg style="left:54px;top:74px" width="16" height="15" viewBox="0 0 16 15"><defs><linearGradient id="g51" x1="0" y1="0" x2="0" y2="1"><stop offset="0" stop-color="#a3bbe4"/><stop offset="1" stop-color="#6687c2"/></linearGradient></defs>
<path d="M0.475 4.5V1.6749999999999998q0-1.200 1.200-1.200H7.3q1.200 0 1.200 1.200V4.5Z" fill="url(#g51)" stroke="#3f5f96" stroke-width="0.95"/>
<path d="M0.475 3.5H14.325000000000001q1.200 0 1.200 1.200V14.525H13.28V13.295q0-1.12-1.12-1.12t-1.12 1.12V14.525H4.960000000000001V13.295q0-1.12-1.12-1.12t-1.12 1.12V14.525H0.475Z" fill="#fff" stroke="#3f5f96" stroke-width="0.95" stroke-linejoin="round"/><rect x="1.400" y="4.200" width="13.200" height="1.600" fill="#dfe6f4"/>
<path d="M2 10.300 3.800 5.500H5.400L7.200 10.300H5.700L5.400 9.300H3.800L3.500 10.300ZM4.100 8.300H5.100L4.600 6.700Z" fill="#d6470f" fill-rule="evenodd"/>
<rect x="8.700" y="5.200" width="5.200" height="1.100" fill="#e2531a"/>
<path d="M8.700 7.900H14M8.700 9.800H14" stroke="#7d92c0" stroke-width="1" stroke-dasharray="1.600 .9"/></svg><span class="t" style="left:72.2px;top:76px;letter-spacing:0.15px;">Alerts</span><div style="left:34px;top:100px;width:4px;height:1px;background:repeating-linear-gradient(90deg,#1a1a1a 0px,#1a1a1a 1px,transparent 1px,transparent 2px)"></div><svg style="left:23px;top:95px" width="11" height="11" viewBox="0 0 11 11"><defs><linearGradient id="g53" x1="0" y1="0" x2="1" y2="1"><stop offset="0" stop-color="#ffffff"/><stop offset=".5" stop-color="#e4eaf6"/><stop offset="1" stop-color="#b9c7e4"/></linearGradient></defs>
<rect x=".5" y=".5" width="10" height="10" rx="2" fill="url(#g53)" stroke="#7f93bb" stroke-width="1"/><path d="M3 5.500H8M5.500 3V8" stroke="#2b2f3a" stroke-width="1"/></svg><svg style="left:54px;top:92px" width="16" height="15" viewBox="0 0 16 15"><defs><linearGradient id="g54" x1="0" y1="0" x2="0" y2="1"><stop offset="0" stop-color="#a3bbe4"/><stop offset="1" stop-color="#6687c2"/></linearGradient></defs>
<path d="M0.475 4.5V1.6749999999999998q0-1.200 1.200-1.200H7.3q1.200 0 1.200 1.200V4.5Z" fill="url(#g54)" stroke="#3f5f96" stroke-width="0.95"/>
<path d="M0.475 3.5H14.325000000000001q1.200 0 1.200 1.200V14.525H13.28V13.295q0-1.12-1.12-1.12t-1.12 1.12V14.525H4.960000000000001V13.295q0-1.12-1.12-1.12t-1.12 1.12V14.525H0.475Z" fill="#fff" stroke="#3f5f96" stroke-width="0.95" stroke-linejoin="round"/><rect x="1.400" y="4.200" width="13.200" height="1.600" fill="#dfe6f4"/>
<path d="M2 10.300 3.800 5.500H5.400L7.200 10.300H5.700L5.400 9.300H3.800L3.500 10.300ZM4.100 8.300H5.100L4.600 6.700Z" fill="#d6470f" fill-rule="evenodd"/>
<rect x="8.700" y="5.200" width="5.200" height="1.100" fill="#e2531a"/>
<path d="M8.700 7.900H14M8.700 9.800H14" stroke="#7d92c0" stroke-width="1" stroke-dasharray="1.600 .9"/></svg><span class="t" style="left:72.2px;top:94px;letter-spacing:0.42px;">Chat</span><div style="left:34px;top:118px;width:4px;height:1px;background:repeating-linear-gradient(90deg,#1a1a1a 0px,#1a1a1a 1px,transparent 1px,transparent 2px)"></div><svg style="left:23px;top:113px" width="11" height="11" viewBox="0 0 11 11"><defs><linearGradient id="g56" x1="0" y1="0" x2="1" y2="1"><stop offset="0" stop-color="#ffffff"/><stop offset=".5" stop-color="#e4eaf6"/><stop offset="1" stop-color="#b9c7e4"/></linearGradient></defs>
<rect x=".5" y=".5" width="10" height="10" rx="2" fill="url(#g56)" stroke="#7f93bb" stroke-width="1"/><path d="M3 5.500H8M5.500 3V8" stroke="#2b2f3a" stroke-width="1"/></svg><svg style="left:54px;top:110px" width="16" height="15" viewBox="0 0 16 15"><defs><linearGradient id="g57" x1="0" y1="0" x2="0" y2="1"><stop offset="0" stop-color="#a3bbe4"/><stop offset="1" stop-color="#6687c2"/></linearGradient></defs>
<path d="M0.475 4.5V1.6749999999999998q0-1.200 1.200-1.200H7.3q1.200 0 1.200 1.200V4.5Z" fill="url(#g57)" stroke="#3f5f96" stroke-width="0.95"/>
<path d="M0.475 3.5H14.325000000000001q1.200 0 1.200 1.200V14.525H13.28V13.295q0-1.12-1.12-1.12t-1.12 1.12V14.525H4.960000000000001V13.295q0-1.12-1.12-1.12t-1.12 1.12V14.525H0.475Z" fill="#fff" stroke="#3f5f96" stroke-width="0.95" stroke-linejoin="round"/><rect x="1.400" y="4.200" width="13.200" height="1.600" fill="#dfe6f4"/>
<path d="M2 10.300 3.800 5.500H5.400L7.200 10.300H5.700L5.400 9.300H3.800L3.500 10.300ZM4.100 8.300H5.100L4.600 6.700Z" fill="#d6470f" fill-rule="evenodd"/>
<rect x="8.700" y="5.200" width="5.200" height="1.100" fill="#e2531a"/>
<path d="M8.700 7.900H14M8.700 9.800H14" stroke="#7d92c0" stroke-width="1" stroke-dasharray="1.600 .9"/></svg><span class="t" style="left:72.2px;top:112px;letter-spacing:-0.06px;">Default Values</span><div style="left:34px;top:136px;width:4px;height:1px;background:repeating-linear-gradient(90deg,#1a1a1a 0px,#1a1a1a 1px,transparent 1px,transparent 2px)"></div><svg style="left:23px;top:131px" width="11" height="11" viewBox="0 0 11 11"><defs><linearGradient id="g59" x1="0" y1="0" x2="1" y2="1"><stop offset="0" stop-color="#ffffff"/><stop offset=".5" stop-color="#e4eaf6"/><stop offset="1" stop-color="#b9c7e4"/></linearGradient></defs>
<rect x=".5" y=".5" width="10" height="10" rx="2" fill="url(#g59)" stroke="#7f93bb" stroke-width="1"/><path d="M3 5.500H8M5.500 3V8" stroke="#2b2f3a" stroke-width="1"/></svg><svg style="left:54px;top:128px" width="16" height="15" viewBox="0 0 16 15"><defs><linearGradient id="g60" x1="0" y1="0" x2="0" y2="1"><stop offset="0" stop-color="#a3bbe4"/><stop offset="1" stop-color="#6687c2"/></linearGradient></defs>
<path d="M0.475 4.5V1.6749999999999998q0-1.200 1.200-1.200H7.3q1.200 0 1.200 1.200V4.5Z" fill="url(#g60)" stroke="#3f5f96" stroke-width="0.95"/>
<path d="M0.475 3.5H14.325000000000001q1.200 0 1.200 1.200V14.525H13.28V13.295q0-1.12-1.12-1.12t-1.12 1.12V14.525H4.960000000000001V13.295q0-1.12-1.12-1.12t-1.12 1.12V14.525H0.475Z" fill="#fff" stroke="#3f5f96" stroke-width="0.95" stroke-linejoin="round"/><rect x="1.400" y="4.200" width="13.200" height="1.600" fill="#dfe6f4"/>
<path d="M2 10.300 3.800 5.500H5.400L7.200 10.300H5.700L5.400 9.300H3.800L3.500 10.300ZM4.100 8.300H5.100L4.600 6.700Z" fill="#d6470f" fill-rule="evenodd"/>
<rect x="8.700" y="5.200" width="5.200" height="1.100" fill="#e2531a"/>
<path d="M8.700 7.900H14M8.700 9.800H14" stroke="#7d92c0" stroke-width="1" stroke-dasharray="1.600 .9"/></svg><span class="t" style="left:72.2px;top:130px;letter-spacing:-0.22px;">General</span><div style="left:34px;top:154px;width:4px;height:1px;background:repeating-linear-gradient(90deg,#1a1a1a 0px,#1a1a1a 1px,transparent 1px,transparent 2px)"></div><svg style="left:23px;top:149px" width="11" height="11" viewBox="0 0 11 11"><defs><linearGradient id="g62" x1="0" y1="0" x2="1" y2="1"><stop offset="0" stop-color="#ffffff"/><stop offset=".5" stop-color="#e4eaf6"/><stop offset="1" stop-color="#b9c7e4"/></linearGradient></defs>
<rect x=".5" y=".5" width="10" height="10" rx="2" fill="url(#g62)" stroke="#7f93bb" stroke-width="1"/><path d="M3 5.500H8M5.500 3V8" stroke="#2b2f3a" stroke-width="1"/></svg><svg style="left:54px;top:146px" width="16" height="15" viewBox="0 0 16 15"><defs><linearGradient id="g63" x1="0" y1="0" x2="0" y2="1"><stop offset="0" stop-color="#a3bbe4"/><stop offset="1" stop-color="#6687c2"/></linearGradient></defs>
<path d="M0.475 4.5V1.6749999999999998q0-1.200 1.200-1.200H7.3q1.200 0 1.200 1.200V4.5Z" fill="url(#g63)" stroke="#3f5f96" stroke-width="0.95"/>
<path d="M0.475 3.5H14.325000000000001q1.200 0 1.200 1.200V14.525H13.28V13.295q0-1.12-1.12-1.12t-1.12 1.12V14.525H4.960000000000001V13.295q0-1.12-1.12-1.12t-1.12 1.12V14.525H0.475Z" fill="#fff" stroke="#3f5f96" stroke-width="0.95" stroke-linejoin="round"/><rect x="1.400" y="4.200" width="13.200" height="1.600" fill="#dfe6f4"/>
<path d="M2 10.300 3.800 5.500H5.400L7.200 10.300H5.700L5.400 9.300H3.800L3.500 10.300ZM4.100 8.300H5.100L4.600 6.700Z" fill="#d6470f" fill-rule="evenodd"/>
<rect x="8.700" y="5.200" width="5.200" height="1.100" fill="#e2531a"/>
<path d="M8.700 7.900H14M8.700 9.800H14" stroke="#7d92c0" stroke-width="1" stroke-dasharray="1.600 .9"/></svg><span class="t" style="left:72.2px;top:148px;letter-spacing:-0.05px;">Item Modification Options</span><div style="left:34px;top:172px;width:4px;height:1px;background:repeating-linear-gradient(90deg,#1a1a1a 0px,#1a1a1a 1px,transparent 1px,transparent 2px)"></div><svg style="left:23px;top:167px" width="11" height="11" viewBox="0 0 11 11"><defs><linearGradient id="g65" x1="0" y1="0" x2="1" y2="1"><stop offset="0" stop-color="#ffffff"/><stop offset=".5" stop-color="#e4eaf6"/><stop offset="1" stop-color="#b9c7e4"/></linearGradient></defs>
<rect x=".5" y=".5" width="10" height="10" rx="2" fill="url(#g65)" stroke="#7f93bb" stroke-width="1"/><path d="M3 5.500H8M5.500 3V8" stroke="#2b2f3a" stroke-width="1"/></svg><svg style="left:54px;top:164px" width="16" height="15" viewBox="0 0 16 15"><defs><linearGradient id="g66" x1="0" y1="0" x2="0" y2="1"><stop offset="0" stop-color="#a3bbe4"/><stop offset="1" stop-color="#6687c2"/></linearGradient></defs>
<path d="M0.475 4.5V1.6749999999999998q0-1.200 1.200-1.200H7.3q1.200 0 1.200 1.200V4.5Z" fill="url(#g66)" stroke="#3f5f96" stroke-width="0.95"/>
<path d="M0.475 3.5H14.325000000000001q1.200 0 1.200 1.200V14.525H13.28V13.295q0-1.12-1.12-1.12t-1.12 1.12V14.525H4.960000000000001V13.295q0-1.12-1.12-1.12t-1.12 1.12V14.525H0.475Z" fill="#fff" stroke="#3f5f96" stroke-width="0.95" stroke-linejoin="round"/><rect x="1.400" y="4.200" width="13.200" height="1.600" fill="#dfe6f4"/>
<path d="M2 10.300 3.800 5.500H5.400L7.200 10.300H5.700L5.400 9.300H3.800L3.500 10.300ZM4.100 8.300H5.100L4.600 6.700Z" fill="#d6470f" fill-rule="evenodd"/>
<rect x="8.700" y="5.200" width="5.200" height="1.100" fill="#e2531a"/>
<path d="M8.700 7.900H14M8.700 9.800H14" stroke="#7d92c0" stroke-width="1" stroke-dasharray="1.600 .9"/></svg><span class="t" style="left:72.2px;top:166px;letter-spacing:-0.24px;">Labels</span><div style="left:34px;top:190px;width:4px;height:1px;background:repeating-linear-gradient(90deg,#1a1a1a 0px,#1a1a1a 1px,transparent 1px,transparent 2px)"></div><svg style="left:23px;top:185px" width="11" height="11" viewBox="0 0 11 11"><defs><linearGradient id="g68" x1="0" y1="0" x2="1" y2="1"><stop offset="0" stop-color="#ffffff"/><stop offset=".5" stop-color="#e4eaf6"/><stop offset="1" stop-color="#b9c7e4"/></linearGradient></defs>
<rect x=".5" y=".5" width="10" height="10" rx="2" fill="url(#g68)" stroke="#7f93bb" stroke-width="1"/><path d="M3 5.500H8M5.500 3V8" stroke="#2b2f3a" stroke-width="1"/></svg><svg style="left:54px;top:182px" width="16" height="15" viewBox="0 0 16 15"><defs><linearGradient id="g69" x1="0" y1="0" x2="0" y2="1"><stop offset="0" stop-color="#a3bbe4"/><stop offset="1" stop-color="#6687c2"/></linearGradient></defs>
<path d="M0.475 4.5V1.6749999999999998q0-1.200 1.200-1.200H7.3q1.200 0 1.200 1.200V4.5Z" fill="url(#g69)" stroke="#3f5f96" stroke-width="0.95"/>
<path d="M0.475 3.5H14.325000000000001q1.200 0 1.200 1.200V14.525H13.28V13.295q0-1.12-1.12-1.12t-1.12 1.12V14.525H4.960000000000001V13.295q0-1.12-1.12-1.12t-1.12 1.12V14.525H0.475Z" fill="#fff" stroke="#3f5f96" stroke-width="0.95" stroke-linejoin="round"/><rect x="1.400" y="4.200" width="13.200" height="1.600" fill="#dfe6f4"/>
<path d="M2 10.300 3.800 5.500H5.400L7.200 10.300H5.700L5.400 9.300H3.800L3.500 10.300ZM4.100 8.300H5.100L4.600 6.700Z" fill="#d6470f" fill-rule="evenodd"/>
<rect x="8.700" y="5.200" width="5.200" height="1.100" fill="#e2531a"/>
<path d="M8.700 7.900H14M8.700 9.800H14" stroke="#7d92c0" stroke-width="1" stroke-dasharray="1.600 .9"/></svg><span class="t" style="left:72.2px;top:184px;letter-spacing:-0.28px;">MessageBoard</span><div style="left:34px;top:208px;width:4px;height:1px;background:repeating-linear-gradient(90deg,#1a1a1a 0px,#1a1a1a 1px,transparent 1px,transparent 2px)"></div><svg style="left:23px;top:203px" width="11" height="11" viewBox="0 0 11 11"><defs><linearGradient id="g71" x1="0" y1="0" x2="1" y2="1"><stop offset="0" stop-color="#ffffff"/><stop offset=".5" stop-color="#e4eaf6"/><stop offset="1" stop-color="#b9c7e4"/></linearGradient></defs>
<rect x=".5" y=".5" width="10" height="10" rx="2" fill="url(#g71)" stroke="#7f93bb" stroke-width="1"/><path d="M3 5.500H8M5.500 3V8" stroke="#2b2f3a" stroke-width="1"/></svg><svg style="left:54px;top:200px" width="16" height="15" viewBox="0 0 16 15"><defs><linearGradient id="g72" x1="0" y1="0" x2="0" y2="1"><stop offset="0" stop-color="#a3bbe4"/><stop offset="1" stop-color="#6687c2"/></linearGradient></defs>
<path d="M0.475 4.5V1.6749999999999998q0-1.200 1.200-1.200H7.3q1.200 0 1.200 1.200V4.5Z" fill="url(#g72)" stroke="#3f5f96" stroke-width="0.95"/>
<path d="M0.475 3.5H14.325000000000001q1.200 0 1.200 1.200V14.525H13.28V13.295q0-1.12-1.12-1.12t-1.12 1.12V14.525H4.960000000000001V13.295q0-1.12-1.12-1.12t-1.12 1.12V14.525H0.475Z" fill="#fff" stroke="#3f5f96" stroke-width="0.95" stroke-linejoin="round"/><rect x="1.400" y="4.200" width="13.200" height="1.600" fill="#dfe6f4"/>
<path d="M2 10.300 3.800 5.500H5.400L7.200 10.300H5.700L5.400 9.300H3.800L3.500 10.300ZM4.100 8.300H5.100L4.600 6.700Z" fill="#d6470f" fill-rule="evenodd"/>
<rect x="8.700" y="5.200" width="5.200" height="1.100" fill="#e2531a"/>
<path d="M8.700 7.900H14M8.700 9.800H14" stroke="#7d92c0" stroke-width="1" stroke-dasharray="1.600 .9"/></svg><span class="t" style="left:72.2px;top:202px;letter-spacing:-0.57px;">OpenURL</span><div style="left:34px;top:226px;width:4px;height:1px;background:repeating-linear-gradient(90deg,#1a1a1a 0px,#1a1a1a 1px,transparent 1px,transparent 2px)"></div><svg style="left:23px;top:221px" width="11" height="11" viewBox="0 0 11 11"><defs><linearGradient id="g74" x1="0" y1="0" x2="1" y2="1"><stop offset="0" stop-color="#ffffff"/><stop offset=".5" stop-color="#e4eaf6"/><stop offset="1" stop-color="#b9c7e4"/></linearGradient></defs>
<rect x=".5" y=".5" width="10" height="10" rx="2" fill="url(#g74)" stroke="#7f93bb" stroke-width="1"/><path d="M3 5.500H8M5.500 3V8" stroke="#2b2f3a" stroke-width="1"/></svg><svg style="left:54px;top:218px" width="16" height="15" viewBox="0 0 16 15"><defs><linearGradient id="g75" x1="0" y1="0" x2="0" y2="1"><stop offset="0" stop-color="#a3bbe4"/><stop offset="1" stop-color="#6687c2"/></linearGradient></defs>
<path d="M0.475 4.5V1.6749999999999998q0-1.200 1.200-1.200H7.3q1.200 0 1.200 1.200V4.5Z" fill="url(#g75)" stroke="#3f5f96" stroke-width="0.95"/>
<path d="M0.475 3.5H14.325000000000001q1.200 0 1.200 1.200V14.525H13.28V13.295q0-1.12-1.12-1.12t-1.12 1.12V14.525H4.960000000000001V13.295q0-1.12-1.12-1.12t-1.12 1.12V14.525H0.475Z" fill="#fff" stroke="#3f5f96" stroke-width="0.95" stroke-linejoin="round"/><rect x="1.400" y="4.200" width="13.200" height="1.600" fill="#dfe6f4"/>
<path d="M2 10.300 3.800 5.500H5.400L7.200 10.300H5.700L5.400 9.300H3.800L3.500 10.300ZM4.100 8.300H5.100L4.600 6.700Z" fill="#d6470f" fill-rule="evenodd"/>
<rect x="8.700" y="5.200" width="5.200" height="1.100" fill="#e2531a"/>
<path d="M8.700 7.900H14M8.700 9.800H14" stroke="#7d92c0" stroke-width="1" stroke-dasharray="1.600 .9"/></svg><span class="t" style="left:72.2px;top:220px;letter-spacing:0.04px;">OpenWorldcat</span><div style="left:34px;top:244px;width:4px;height:1px;background:repeating-linear-gradient(90deg,#1a1a1a 0px,#1a1a1a 1px,transparent 1px,transparent 2px)"></div><svg style="left:23px;top:239px" width="11" height="11" viewBox="0 0 11 11"><defs><linearGradient id="g77" x1="0" y1="0" x2="1" y2="1"><stop offset="0" stop-color="#ffffff"/><stop offset=".5" stop-color="#e4eaf6"/><stop offset="1" stop-color="#b9c7e4"/></linearGradient></defs>
<rect x=".5" y=".5" width="10" height="10" rx="2" fill="url(#g77)" stroke="#7f93bb" stroke-width="1"/><path d="M3 5.500H8M5.500 3V8" stroke="#2b2f3a" stroke-width="1"/></svg><svg style="left:54px;top:236px" width="16" height="15" viewBox="0 0 16 15"><defs><linearGradient id="g78" x1="0" y1="0" x2="0" y2="1"><stop offset="0" stop-color="#a3bbe4"/><stop offset="1" stop-color="#6687c2"/></linearGradient></defs>
<path d="M0.475 4.5V1.6749999999999998q0-1.200 1.200-1.200H7.3q1.200 0 1.200 1.200V4.5Z" fill="url(#g78)" stroke="#3f5f96" stroke-width="0.95"/>
<path d="M0.475 3.5H14.325000000000001q1.200 0 1.200 1.200V14.525H13.28V13.295q0-1.12-1.12-1.12t-1.12 1.12V14.525H4.960000000000001V13.295q0-1.12-1.12-1.12t-1.12 1.12V14.525H0.475Z" fill="#fff" stroke="#3f5f96" stroke-width="0.95" stroke-linejoin="round"/><rect x="1.400" y="4.200" width="13.200" height="1.600" fill="#dfe6f4"/>
<path d="M2 10.300 3.800 5.500H5.400L7.200 10.300H5.700L5.400 9.300H3.800L3.500 10.300ZM4.100 8.300H5.100L4.600 6.700Z" fill="#d6470f" fill-rule="evenodd"/>
<rect x="8.700" y="5.200" width="5.200" height="1.100" fill="#e2531a"/>
<path d="M8.700 7.900H14M8.700 9.800H14" stroke="#7d92c0" stroke-width="1" stroke-dasharray="1.600 .9"/></svg><span class="t" style="left:72.2px;top:238px;letter-spacing:0.04px;">Paths</span><div style="left:34px;top:262px;width:4px;height:1px;background:repeating-linear-gradient(90deg,#1a1a1a 0px,#1a1a1a 1px,transparent 1px,transparent 2px)"></div><svg style="left:23px;top:257px" width="11" height="11" viewBox="0 0 11 11"><defs><linearGradient id="g80" x1="0" y1="0" x2="1" y2="1"><stop offset="0" stop-color="#ffffff"/><stop offset=".5" stop-color="#e4eaf6"/><stop offset="1" stop-color="#b9c7e4"/></linearGradient></defs>
<rect x=".5" y=".5" width="10" height="10" rx="2" fill="url(#g80)" stroke="#7f93bb" stroke-width="1"/><path d="M3 5.500H8M5.500 3V8" stroke="#2b2f3a" stroke-width="1"/></svg><svg style="left:54px;top:254px" width="16" height="15" viewBox="0 0 16 15"><defs><linearGradient id="g81" x1="0" y1="0" x2="0" y2="1"><stop offset="0" stop-color="#a3bbe4"/><stop offset="1" stop-color="#6687c2"/></linearGradient></defs>
<path d="M0.475 4.5V1.6749999999999998q0-1.200 1.200-1.200H7.3q1.200 0 1.200 1.200V4.5Z" fill="url(#g81)" stroke="#3f5f96" stroke-width="0.95"/>
<path d="M0.475 3.5H14.325000000000001q1.200 0 1.200 1.200V14.525H13.28V13.295q0-1.12-1.12-1.12t-1.12 1.12V14.525H4.960000000000001V13.295q0-1.12-1.12-1.12t-1.12 1.12V14.525H0.475Z" fill="#fff" stroke="#3f5f96" stroke-width="0.95" stroke-linejoin="round"/><rect x="1.400" y="4.200" width="13.200" height="1.600" fill="#dfe6f4"/>
<path d="M2 10.300 3.800 5.500H5.400L7.200 10.300H5.700L5.400 9.300H3.800L3.500 10.300ZM4.100 8.300H5.100L4.600 6.700Z" fill="#d6470f" fill-rule="evenodd"/>
<rect x="8.700" y="5.200" width="5.200" height="1.100" fill="#e2531a"/>
<path d="M8.700 7.900H14M8.700 9.800H14" stroke="#7d92c0" stroke-width="1" stroke-dasharray="1.600 .9"/></svg><span class="t" style="left:72.2px;top:256px;letter-spacing:-0.06px;">Proxies</span><div style="left:34px;top:280px;width:4px;height:1px;background:repeating-linear-gradient(90deg,#1a1a1a 0px,#1a1a1a 1px,transparent 1px,transparent 2px)"></div><svg style="left:23px;top:275px" width="11" height="11" viewBox="0 0 11 11"><defs><linearGradient id="g83" x1="0" y1="0" x2="1" y2="1"><stop offset="0" stop-color="#ffffff"/><stop offset=".5" stop-color="#e4eaf6"/><stop offset="1" stop-color="#b9c7e4"/></linearGradient></defs>
<rect x=".5" y=".5" width="10" height="10" rx="2" fill="url(#g83)" stroke="#7f93bb" stroke-width="1"/><path d="M3 5.500H8M5.500 3V8" stroke="#2b2f3a" stroke-width="1"/></svg><svg style="left:54px;top:272px" width="16" height="15" viewBox="0 0 16 15"><defs><linearGradient id="g84" x1="0" y1="0" x2="0" y2="1"><stop offset="0" stop-color="#a3bbe4"/><stop offset="1" stop-color="#6687c2"/></linearGradient></defs>
<path d="M0.475 4.5V1.6749999999999998q0-1.200 1.200-1.200H7.3q1.200 0 1.200 1.200V4.5Z" fill="url(#g84)" stroke="#3f5f96" stroke-width="0.95"/>
<path d="M0.475 3.5H14.325000000000001q1.200 0 1.200 1.200V14.525H13.28V13.295q0-1.12-1.12-1.12t-1.12 1.12V14.525H4.960000000000001V13.295q0-1.12-1.12-1.12t-1.12 1.12V14.525H0.475Z" fill="#fff" stroke="#3f5f96" stroke-width="0.95" stroke-linejoin="round"/><rect x="1.400" y="4.200" width="13.200" height="1.600" fill="#dfe6f4"/>
<path d="M2 10.300 3.800 5.500H5.400L7.200 10.300H5.700L5.400 9.300H3.800L3.500 10.300ZM4.100 8.300H5.100L4.600 6.700Z" fill="#d6470f" fill-rule="evenodd"/>
<rect x="8.700" y="5.200" width="5.200" height="1.100" fill="#e2531a"/>
<path d="M8.700 7.900H14M8.700 9.800H14" stroke="#7d92c0" stroke-width="1" stroke-dasharray="1.600 .9"/></svg><span class="t" style="left:72.2px;top:274px;letter-spacing:-1.20px;">RSS</span><div style="left:34px;top:298px;width:4px;height:1px;background:repeating-linear-gradient(90deg,#1a1a1a 0px,#1a1a1a 1px,transparent 1px,transparent 2px)"></div><svg style="left:23px;top:293px" width="11" height="11" viewBox="0 0 11 11"><defs><linearGradient id="g86" x1="0" y1="0" x2="1" y2="1"><stop offset="0" stop-color="#ffffff"/><stop offset=".5" stop-color="#e4eaf6"/><stop offset="1" stop-color="#b9c7e4"/></linearGradient></defs>
<rect x=".5" y=".5" width="10" height="10" rx="2" fill="url(#g86)" stroke="#7f93bb" stroke-width="1"/><path d="M3 5.500H8" stroke="#2b2f3a" stroke-width="1"/></svg><svg style="left:54px;top:290px" width="16" height="15" viewBox="0 0 16 15"><defs><linearGradient id="g87" x1="0" y1="0" x2="0" y2="1"><stop offset="0" stop-color="#a3bbe4"/><stop offset="1" stop-color="#6687c2"/></linearGradient></defs>
<path d="M0.475 4.5V1.6749999999999998q0-1.200 1.200-1.200H7.3q1.200 0 1.200 1.200V4.5Z" fill="url(#g87)" stroke="#3f5f96" stroke-width="0.95"/>
<path d="M0.475 3.5H14.325000000000001q1.200 0 1.200 1.200V14.525H13.28V13.295q0-1.12-1.12-1.12t-1.12 1.12V14.525H4.960000000000001V13.295q0-1.12-1.12-1.12t-1.12 1.12V14.525H0.475Z" fill="#fff" stroke="#3f5f96" stroke-width="0.95" stroke-linejoin="round"/><rect x="1.400" y="4.200" width="13.200" height="1.600" fill="#dfe6f4"/>
<path d="M2 10.300 3.800 5.500H5.400L7.200 10.300H5.700L5.400 9.300H3.800L3.500 10.300ZM4.100 8.300H5.100L4.600 6.700Z" fill="#d6470f" fill-rule="evenodd"/>
<rect x="8.700" y="5.200" width="5.200" height="1.100" fill="#e2531a"/>
<path d="M8.700 7.900H14M8.700 9.800H14" stroke="#7d92c0" stroke-width="1" stroke-dasharray="1.600 .9"/></svg><span class="t" style="left:72.2px;top:292px;letter-spacing:0.08px;">Settings</span><div style="left:48px;top:316px;width:8px;height:1px;background:repeating-linear-gradient(90deg,#1a1a1a 0px,#1a1a1a 1px,transparent 1px,transparent 2px)"></div><svg style="left:72px;top:306.5px" width="16" height="17" viewBox="0 0 16 17"><defs><linearGradient id="g89" x1="0" y1="0" x2="1" y2="1"><stop offset="0" stop-color="#fdeeb8"/><stop offset="1" stop-color="#e0a932"/></linearGradient></defs>
<path d="M6.800 8 14.600 15.600" stroke="#d9a436" stroke-width="2.300" stroke-linecap="round"/>
<path d="M6.800 7.600 14.400 15" stroke="#f5d57c" stroke-width=".9" stroke-linecap="round"/>
<path d="M11 13.400 9.900 14.500M12.800 15.200 11.900 16.100" stroke="#dcaa3c" stroke-width="1.200"/>
<circle cx="4.700" cy="5.900" r="3" fill="url(#g89)" stroke="#dba83a" stroke-width="1"/>
<circle cx="3.900" cy="5.100" r="1" fill="#fff"/></svg><span class="t" style="left:90.2px;top:310px;letter-spacing:-0.24px;">AllowPublicItemSearch</span><div style="left:48px;top:334px;width:8px;height:1px;background:repeating-linear-gradient(90deg,#1a1a1a 0px,#1a1a1a 1px,transparent 1px,transparent 2px)"></div><div style="left:88px;top:325px;width:178px;height:18px;background:#7b95de"></div><svg style="left:72px;top:326px" width="16" height="15" viewBox="0 0 16 15"><rect x=".5" y=".5" width="15" height="14" fill="#fff" stroke="#8b8b8b" stroke-width="1"/>
<rect x="2.300" y="2.300" width="11.400" height="10.400" fill="#5c9c3c" stroke="#4a8a2e" stroke-width=".6"/>
<rect x="3" y="3" width="10" height="1.300" fill="#8cc46a"/><rect x="3.2" y="5.0" width="2.800" height="1.100" fill="#eef7e6"/><rect x="6.6" y="5.0" width="2.800" height="1.100" fill="#eef7e6"/><rect x="10.0" y="5.0" width="2.800" height="1.100" fill="#eef7e6"/><rect x="3.2" y="6.9" width="2.800" height="1.100" fill="#eef7e6"/><rect x="6.6" y="6.9" width="2.800" height="1.100" fill="#eef7e6"/><rect x="10.0" y="6.9" width="2.800" height="1.100" fill="#eef7e6"/><rect x="3.2" y="8.8" width="2.800" height="1.100" fill="#eef7e6"/><rect x="6.6" y="8.8" width="2.800" height="1.100" fill="#eef7e6"/><rect x="10.0" y="8.8" width="2.800" height="1.100" fill="#eef7e6"/><rect x="3.2" y="10.7" width="2.800" height="1.100" fill="#eef7e6"/><rect x="6.6" y="10.7" width="2.800" height="1.100" fill="#eef7e6"/><rect x="10.0" y="10.7" width="2.800" height="1.100" fill="#eef7e6"/></svg><span class="tw" style="left:90.2px;top:328px;letter-spacing:-0.15px;">DisplayStatuses</span><div style="left:48px;top:352px;width:8px;height:1px;background:repeating-linear-gradient(90deg,#1a1a1a 0px,#1a1a1a 1px,transparent 1px,transparent 2px)"></div><svg style="left:72px;top:342.5px" width="16" height="17" viewBox="0 0 16 17"><defs><linearGradient id="g90" x1="0" y1="0" x2="1" y2="1"><stop offset="0" stop-color="#fdeeb8"/><stop offset="1" stop-color="#e0a932"/></linearGradient></defs>
<path d="M6.800 8 14.600 15.600" stroke="#d9a436" stroke-width="2.300" stroke-linecap="round"/>
<path d="M6.800 7.600 14.400 15" stroke="#f5d57c" stroke-width=".9" stroke-linecap="round"/>
<path d="M11 13.400 9.900 14.500M12.800 15.200 11.900 16.100" stroke="#dcaa3c" stroke-width="1.200"/>
<circle cx="4.700" cy="5.900" r="3" fill="url(#g90)" stroke="#dba83a" stroke-width="1"/>
<circle cx="3.900" cy="5.100" r="1" fill="#fff"/></svg><span class="t" style="left:90.2px;top:346px;letter-spacing:-0.28px;">HotListName</span><div style="left:48px;top:370px;width:8px;height:1px;background:repeating-linear-gradient(90deg,#1a1a1a 0px,#1a1a1a 1px,transparent 1px,transparent 2px)"></div><svg style="left:72px;top:360.5px" width="16" height="17" viewBox="0 0 16 17"><defs><linearGradient id="g91" x1="0" y1="0" x2="1" y2="1"><stop offset="0" stop-color="#fdeeb8"/><stop offset="1" stop-color="#e0a932"/></linearGradient></defs>
<path d="M6.800 8 14.600 15.600" stroke="#d9a436" stroke-width="2.300" stroke-linecap="round"/>
<path d="M6.800 7.600 14.400 15" stroke="#f5d57c" stroke-width=".9" stroke-linecap="round"/>
<path d="M11 13.400 9.900 14.500M12.800 15.200 11.900 16.100" stroke="#dcaa3c" stroke-width="1.200"/>
<circle cx="4.700" cy="5.900" r="3" fill="url(#g91)" stroke="#dba83a" stroke-width="1"/>
<circle cx="3.900" cy="5.100" r="1" fill="#fff"/></svg><span class="t" style="left:90.2px;top:364px;letter-spacing:-0.18px;">PasswordResetMinutes</span><div style="left:48px;top:388px;width:8px;height:1px;background:repeating-linear-gradient(90deg,#1a1a1a 0px,#1a1a1a 1px,transparent 1px,transparent 2px)"></div><svg style="left:72px;top:378.5px" width="16" height="17" viewBox="0 0 16 17"><defs><linearGradient id="g92" x1="0" y1="0" x2="1" y2="1"><stop offset="0" stop-color="#fdeeb8"/><stop offset="1" stop-color="#e0a932"/></linearGradient></defs>
<path d="M6.800 8 14.600 15.600" stroke="#d9a436" stroke-width="2.300" stroke-linecap="round"/>
<path d="M6.800 7.600 14.400 15" stroke="#f5d57c" stroke-width=".9" stroke-linecap="round"/>
<path d="M11 13.400 9.900 14.500M12.800 15.200 11.900 16.100" stroke="#dcaa3c" stroke-width="1.200"/>
<circle cx="4.700" cy="5.900" r="3" fill="url(#g92)" stroke="#dba83a" stroke-width="1"/>
<circle cx="3.900" cy="5.100" r="1" fill="#fff"/></svg><span class="t" style="left:90.2px;top:382px;letter-spacing:-0.14px;">StatusDoNotAllowDelete</span><div style="left:48px;top:406px;width:8px;height:1px;background:repeating-linear-gradient(90deg,#1a1a1a 0px,#1a1a1a 1px,transparent 1px,transparent 2px)"></div><svg style="left:72px;top:396.5px" width="16" height="17" viewBox="0 0 16 17"><defs><linearGradient id="g93" x1="0" y1="0" x2="1" y2="1"><stop offset="0" stop-color="#fdeeb8"/><stop offset="1" stop-color="#e0a932"/></linearGradient></defs>
<path d="M6.800 8 14.600 15.600" stroke="#d9a436" stroke-width="2.300" stroke-linecap="round"/>
<path d="M6.800 7.600 14.400 15" stroke="#f5d57c" stroke-width=".9" stroke-linecap="round"/>
<path d="M11 13.400 9.900 14.500M12.800 15.200 11.900 16.100" stroke="#dcaa3c" stroke-width="1.200"/>
<circle cx="4.700" cy="5.900" r="3" fill="url(#g93)" stroke="#dba83a" stroke-width="1"/>
<circle cx="3.900" cy="5.100" r="1" fill="#fff"/></svg><span class="t" style="left:90.2px;top:400px;letter-spacing:-0.20px;">UseHotList</span><div style="left:48px;top:424px;width:8px;height:1px;background:repeating-linear-gradient(90deg,#1a1a1a 0px,#1a1a1a 1px,transparent 1px,transparent 2px)"></div><svg style="left:72px;top:414.5px" width="16" height="17" viewBox="0 0 16 17"><defs><linearGradient id="g94" x1="0" y1="0" x2="1" y2="1"><stop offset="0" stop-color="#fdeeb8"/><stop offset="1" stop-color="#e0a932"/></linearGradient></defs>
<path d="M6.800 8 14.600 15.600" stroke="#d9a436" stroke-width="2.300" stroke-linecap="round"/>
<path d="M6.800 7.600 14.400 15" stroke="#f5d57c" stroke-width=".9" stroke-linecap="round"/>
<path d="M11 13.400 9.900 14.500M12.800 15.200 11.900 16.100" stroke="#dcaa3c" stroke-width="1.200"/>
<circle cx="4.700" cy="5.900" r="3" fill="url(#g94)" stroke="#dba83a" stroke-width="1"/>
<circle cx="3.900" cy="5.100" r="1" fill="#fff"/></svg><span class="t" style="left:90.2px;top:418px;letter-spacing:-0.28px;">UseSemesters</span><div style="left:48px;top:442px;width:8px;height:1px;background:repeating-linear-gradient(90deg,#1a1a1a 0px,#1a1a1a 1px,transparent 1px,transparent 2px)"></div><svg style="left:72px;top:432.5px" width="16" height="17" viewBox="0 0 16 17"><defs><linearGradient id="g95" x1="0" y1="0" x2="1" y2="1"><stop offset="0" stop-color="#fdeeb8"/><stop offset="1" stop-color="#e0a932"/></linearGradient></defs>
<path d="M6.800 8 14.600 15.600" stroke="#d9a436" stroke-width="2.300" stroke-linecap="round"/>
<path d="M6.800 7.600 14.400 15" stroke="#f5d57c" stroke-width=".9" stroke-linecap="round"/>
<path d="M11 13.400 9.900 14.500M12.800 15.200 11.900 16.100" stroke="#dcaa3c" stroke-width="1.200"/>
<circle cx="4.700" cy="5.900" r="3" fill="url(#g95)" stroke="#dba83a" stroke-width="1"/>
<circle cx="3.900" cy="5.100" r="1" fill="#fff"/></svg><span class="t" style="left:90.2px;top:436px;letter-spacing:-0.31px;">WebLogoutURL</span><div style="left:48px;top:460px;width:8px;height:1px;background:repeating-linear-gradient(90deg,#1a1a1a 0px,#1a1a1a 1px,transparent 1px,transparent 2px)"></div><svg style="left:72px;top:450.5px" width="16" height="17" viewBox="0 0 16 17"><defs><linearGradient id="g96" x1="0" y1="0" x2="1" y2="1"><stop offset="0" stop-color="#fdeeb8"/><stop offset="1" stop-color="#e0a932"/></linearGradient></defs>
<path d="M6.800 8 14.600 15.600" stroke="#d9a436" stroke-width="2.300" stroke-linecap="round"/>
<path d="M6.800 7.600 14.400 15" stroke="#f5d57c" stroke-width=".9" stroke-linecap="round"/>
<path d="M11 13.400 9.900 14.500M12.800 15.200 11.900 16.100" stroke="#dcaa3c" stroke-width="1.200"/>
<circle cx="4.700" cy="5.900" r="3" fill="url(#g96)" stroke="#dba83a" stroke-width="1"/>
<circle cx="3.900" cy="5.100" r="1" fill="#fff"/></svg><span class="t" style="left:90.2px;top:454px;letter-spacing:-0.09px;">WebRedirectProtocol</span><div style="left:48px;top:478px;width:8px;height:1px;background:repeating-linear-gradient(90deg,#1a1a1a 0px,#1a1a1a 1px,transparent 1px,transparent 2px)"></div><svg style="left:72px;top:468.5px" width="16" height="17" viewBox="0 0 16 17"><defs><linearGradient id="g97" x1="0" y1="0" x2="1" y2="1"><stop offset="0" stop-color="#fdeeb8"/><stop offset="1" stop-color="#e0a932"/></linearGradient></defs>
<path d="M6.800 8 14.600 15.600" stroke="#d9a436" stroke-width="2.300" stroke-linecap="round"/>
<path d="M6.800 7.600 14.400 15" stroke="#f5d57c" stroke-width=".9" stroke-linecap="round"/>
<path d="M11 13.400 9.900 14.500M12.800 15.200 11.900 16.100" stroke="#dcaa3c" stroke-width="1.200"/>
<circle cx="4.700" cy="5.900" r="3" fill="url(#g97)" stroke="#dba83a" stroke-width="1"/>
<circle cx="3.900" cy="5.100" r="1" fill="#fff"/></svg><span class="t" style="left:90.2px;top:472px;letter-spacing:-0.03px;">WebServer</span><div style="left:48px;top:496px;width:8px;height:1px;background:repeating-linear-gradient(90deg,#1a1a1a 0px,#1a1a1a 1px,transparent 1px,transparent 2px)"></div><svg style="left:72px;top:486.5px" width="16" height="17" viewBox="0 0 16 17"><defs><linearGradient id="g98" x1="0" y1="0" x2="1" y2="1"><stop offset="0" stop-color="#fdeeb8"/><stop offset="1" stop-color="#e0a932"/></linearGradient></defs>
<path d="M6.800 8 14.600 15.600" stroke="#d9a436" stroke-width="2.300" stroke-linecap="round"/>
<path d="M6.800 7.600 14.400 15" stroke="#f5d57c" stroke-width=".9" stroke-linecap="round"/>
<path d="M11 13.400 9.900 14.500M12.800 15.200 11.900 16.100" stroke="#dcaa3c" stroke-width="1.200"/>
<circle cx="4.700" cy="5.900" r="3" fill="url(#g98)" stroke="#dba83a" stroke-width="1"/>
<circle cx="3.900" cy="5.100" r="1" fill="#fff"/></svg><span class="t" style="left:90.2px;top:490px;letter-spacing:-0.38px;">WebServiceURL</span><div style="left:48px;top:514px;width:8px;height:1px;background:repeating-linear-gradient(90deg,#1a1a1a 0px,#1a1a1a 1px,transparent 1px,transparent 2px)"></div><svg style="left:72px;top:504.5px" width="16" height="17" viewBox="0 0 16 17"><defs><linearGradient id="g99" x1="0" y1="0" x2="1" y2="1"><stop offset="0" stop-color="#fdeeb8"/><stop offset="1" stop-color="#e0a932"/></linearGradient></defs>
<path d="M6.800 8 14.600 15.600" stroke="#d9a436" stroke-width="2.300" stroke-linecap="round"/>
<path d="M6.800 7.600 14.400 15" stroke="#f5d57c" stroke-width=".9" stroke-linecap="round"/>
<path d="M11 13.400 9.900 14.500M12.800 15.200 11.900 16.100" stroke="#dcaa3c" stroke-width="1.200"/>
<circle cx="4.700" cy="5.900" r="3" fill="url(#g99)" stroke="#dba83a" stroke-width="1"/>
<circle cx="3.900" cy="5.100" r="1" fill="#fff"/></svg><span class="t" style="left:90.2px;top:509px;letter-spacing:-1.20px;">WebURL</span></div><div style="left:276px;top:172px;width:17px;height:511px;background:linear-gradient(90deg,#f6f6f6,#f0f0f0 50%,#ececec)"></div><svg style="left:280px;top:178px" width="9" height="5" viewBox="0 0 9 5"><path d="M0 5 4.500 0 9 5Z" fill="#3d4b74"/></svg><svg style="left:280px;top:672px" width="9" height="5" viewBox="0 0 9 5"><path d="M0 0 4.500 5 9 0Z" fill="#3d4b74"/></svg><div style="left:277px;top:190px;width:15px;height:391px;border:1px solid #4f5f88;border-radius:2px;background:linear-gradient(90deg,#e9ecf1 0%,#e3e7ee 38%,#c9d3e2 45%,#c3cedf 70%,#dfe6f0 100%)"></div><div style="left:281px;top:382px;width:7px;height:1px;background:#4d5d8a"></div><div style="left:281px;top:383px;width:7px;height:1px;background:#eef1f6"></div><div style="left:281px;top:384px;width:7px;height:1px;background:#4d5d8a"></div><div style="left:281px;top:385px;width:7px;height:1px;background:#eef1f6"></div><div style="left:281px;top:386px;width:7px;height:1px;background:#4d5d8a"></div><div style="left:281px;top:387px;width:7px;height:1px;background:#eef1f6"></div><div style="left:281px;top:388px;width:7px;height:1px;background:#4d5d8a"></div><div style="left:281px;top:389px;width:7px;height:1px;background:#eef1f6"></div><div style="left:293px;top:172px;width:4px;height:511px;background:linear-gradient(90deg,#fff,#f4f8fe 40%,#d6e5fb)"></div><div style="left:294px;top:419px;width:2px;height:2px;background:#5b88d4"></div><div style="left:295px;top:420px;width:2px;height:2px;background:#fff"></div><div style="left:295px;top:420px;width:1px;height:1px;background:#8fb0e4"></div><div style="left:294px;top:423px;width:2px;height:2px;background:#5b88d4"></div><div style="left:295px;top:424px;width:2px;height:2px;background:#fff"></div><div style="left:295px;top:424px;width:1px;height:1px;background:#8fb0e4"></div><div style="left:294px;top:427px;width:2px;height:2px;background:#5b88d4"></div><div style="left:295px;top:428px;width:2px;height:2px;background:#fff"></div><div style="left:295px;top:428px;width:1px;height:1px;background:#8fb0e4"></div><div style="left:294px;top:431px;width:2px;height:2px;background:#5b88d4"></div><div style="left:295px;top:432px;width:2px;height:2px;background:#fff"></div><div style="left:295px;top:432px;width:1px;height:1px;background:#8fb0e4"></div><div style="left:294px;top:435px;width:2px;height:2px;background:#5b88d4"></div><div style="left:295px;top:436px;width:2px;height:2px;background:#fff"></div><div style="left:295px;top:436px;width:1px;height:1px;background:#8fb0e4"></div><div style="left:13px;top:172px;width:101px;height:1px;background:#f5f8fe"></div><!-- right panel -->
<div style="left:297px;top:172px;width:698px;height:1px;background:#f2f6fd"></div><div style="left:297px;top:173px;width:697px;height:509px;border:1px solid #6593cf;background:#edf3fd"></div><div style="left:299px;top:175px;width:693px;height:505px;border:1px solid #6593cf;background:#e3efff"></div><span class="t" style="left:569.3px;top:192px;transform-origin:0 50%;transform:scaleX(1.0655);font-size:18.5px;line-height:24px;font-weight:bold;color:#800000">DisplayStatuses</span><div style="left:304px;top:229px;width:682px;height:445px;border:1px solid #6593cf;background:#fff"></div><div style="left:306px;top:231px;width:33px;height:23px;background:linear-gradient(#ffffff 0px,#f6faff 4px,#e3eeff 11px,#c8ddfc 22px);border:1px solid #6a95d4;box-shadow:inset 1px 0 0 rgba(255,255,255,.8);"></div><div style="left:338px;top:231px;width:204px;height:23px;background:linear-gradient(#ffffff 0px,#f6faff 4px,#e3eeff 11px,#c8ddfc 22px);border:1px solid #6a95d4;box-shadow:inset 1px 0 0 rgba(255,255,255,.8);"></div><div style="left:541px;top:231px;width:234px;height:23px;background:linear-gradient(#ffffff 0px,#f6faff 4px,#e3eeff 11px,#c8ddfc 22px);border:1px solid #6a95d4;box-shadow:inset 1px 0 0 rgba(255,255,255,.8);"></div><div style="left:774px;top:231px;width:210px;height:23px;background:linear-gradient(#ffffff 0px,#f6faff 4px,#e3eeff 11px,#c8ddfc 22px);border:1px solid #6a95d4;box-shadow:inset 1px 0 0 rgba(255,255,255,.8);"></div><span class="t" style="left:310.5px;top:237px;letter-spacing:0.50px;">ID</span><span class="t" style="left:342.9px;top:237px;letter-spacing:0.18px;">Item Status</span><span class="t" style="left:546.1px;top:237px;letter-spacing:-0.14px;">Web Display Status</span><div style="left:306px;top:254px;width:235px;height:19px;background:#7b95de"></div><div style="left:306px;top:273px;width:469px;height:1px;background:#dce8f8"></div><div style="left:306px;top:293px;width:469px;height:1px;background:#dce8f8"></div><div style="left:306px;top:313px;width:469px;height:1px;background:#dce8f8"></div><div style="left:338px;top:254px;width:1px;height:60px;background:#dce8f8"></div><div style="left:541px;top:254px;width:1px;height:60px;background:#dce8f8"></div><div style="left:774px;top:254px;width:1px;height:60px;background:#dce8f8"></div><div style="left:338px;top:254px;width:1px;height:19px;background:#c9d5f3"></div><span class="tw" style="right:672px;top:257px;">1</span><span class="tw" style="left:341.5px;top:257px;letter-spacing:-0.09px;">Awaiting Copyright Clearance</span><span class="t" style="left:543.7px;top:257px;letter-spacing:0.07px;">Waiting for Copyright Approval</span><span class="t" style="right:672px;top:277px;">2</span><span class="t" style="left:341.5px;top:277px;letter-spacing:0.15px;">Item Cancelled by.+</span><span class="t" style="left:543.7px;top:277px;letter-spacing:-0.05px;">Item Cancelled</span><span class="t" style="right:672px;top:297px;">3</span><span class="t" style="left:341.5px;top:297px;letter-spacing:0.02px;">Request Held Until (.+)</span><span class="t" style="left:543.7px;top:297px;letter-spacing:-0.01px;">Held until $1</span><!-- status bar -->
<div style="left:8px;top:684px;width:992px;height:4px;background:linear-gradient(#c3d0e7 0px,#d6e1f2 1px,#e3ecfa 2px,#ebf2fd 4px)"></div><div style="left:8px;top:688px;width:992px;height:1px;background:#5f84c4"></div><div style="left:8px;top:689px;width:992px;height:22px;background:linear-gradient(#f4f8fe 0px,#f4f8fe 1px,#d7e6fa 1px,#d0e1f8 7px,#b0cef4 7px,#bad3f5 13px,#d2e2f8 18px,#dbe7f9 22px)"></div><div style="left:8px;top:711px;width:992px;height:1px;background:#6aa9c8"></div><span class="tb" style="left:11.4px;top:694px;letter-spacing:0.21px;">atlas</span><div style="left:993px;top:696px;width:2px;height:2px;background:#5b88d4"></div><div style="left:994px;top:697px;width:2px;height:2px;background:#fff"></div><div style="left:994px;top:697px;width:1px;height:1px;background:#9fbbe8"></div><div style="left:989px;top:700px;width:2px;height:2px;background:#5b88d4"></div><div style="left:990px;top:701px;width:2px;height:2px;background:#fff"></div><div style="left:990px;top:701px;width:1px;height:1px;background:#9fbbe8"></div><div style="left:993px;top:700px;width:2px;height:2px;background:#5b88d4"></div><div style="left:994px;top:701px;width:2px;height:2px;background:#fff"></div><div style="left:994px;top:701px;width:1px;height:1px;background:#9fbbe8"></div><div style="left:985px;top:704px;width:2px;height:2px;background:#5b88d4"></div><div style="left:986px;top:705px;width:2px;height:2px;background:#fff"></div><div style="left:986px;top:705px;width:1px;height:1px;background:#9fbbe8"></div><div style="left:989px;top:704px;width:2px;height:2px;background:#5b88d4"></div><div style="left:990px;top:705px;width:2px;height:2px;background:#fff"></div><div style="left:990px;top:705px;width:1px;height:1px;background:#9fbbe8"></div><div style="left:993px;top:704px;width:2px;height:2px;background:#5b88d4"></div><div style="left:994px;top:705px;width:2px;height:2px;background:#fff"></div><div style="left:994px;top:705px;width:1px;height:1px;background:#9fbbe8"></div></div>
</body></html>
